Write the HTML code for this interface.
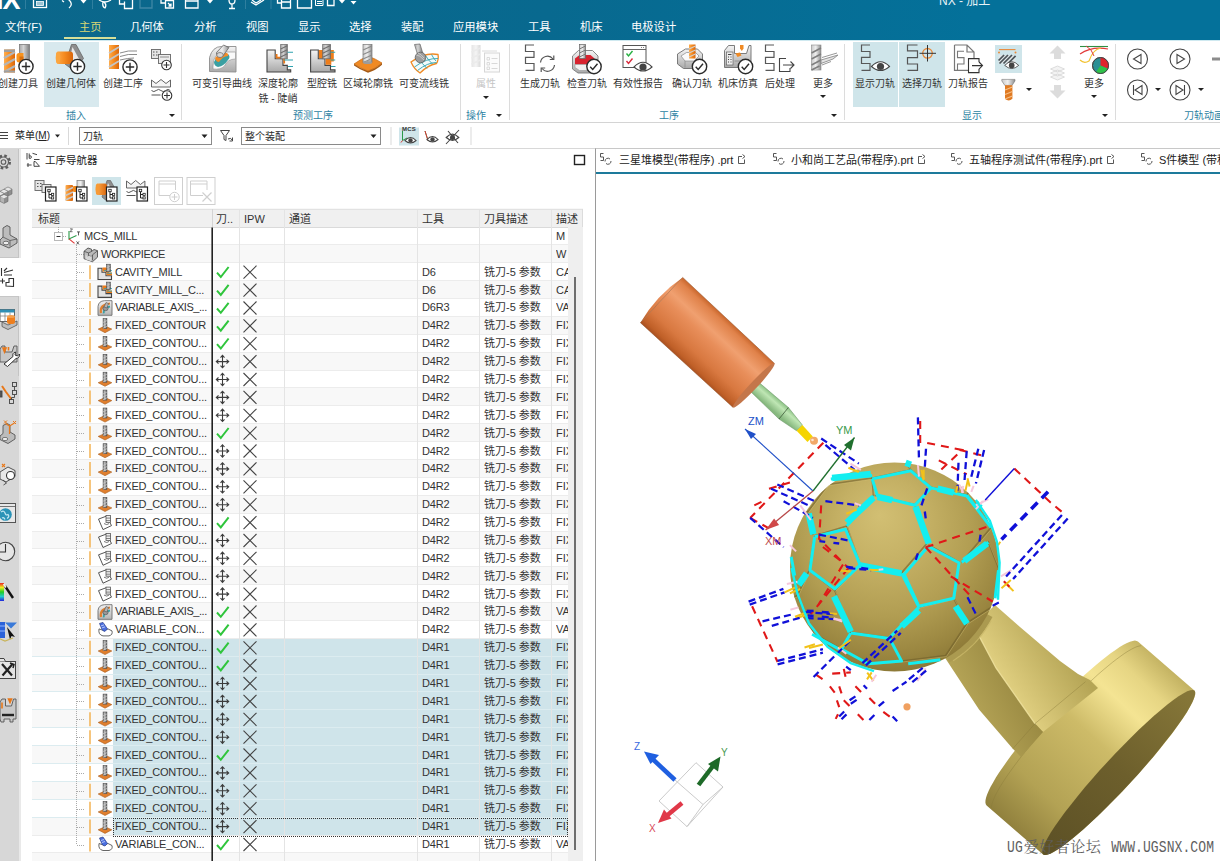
<!DOCTYPE html>
<html lang="zh"><head><meta charset="utf-8"><title>NX - 加工</title>
<style>
html,body{margin:0;padding:0;}
body{width:1220px;height:861px;overflow:hidden;background:#fff;position:relative;
 font-family:"Liberation Sans","Noto Sans CJK SC",sans-serif;font-size:11px;color:#2a2a2a;}
.abs{position:absolute;}
svg{position:absolute;overflow:visible;}
#title{position:absolute;left:0;top:0;width:1220px;height:40px;background:linear-gradient(90deg,#0b678b 0%,#08698f 45%,#04719a 80%,#04719a 100%);overflow:hidden;}
#title .tab{position:absolute;top:18.8px;font-size:11.3px;color:#fff;white-space:nowrap;line-height:16px;}
#ribbon{position:absolute;left:0;top:40px;width:1220px;height:82px;background:#fff;border-bottom:1px solid #d4d4d4;box-shadow:inset 0 1px 0 #cfe9f0;}
.rl{position:absolute;font-size:10px;color:#333;white-space:nowrap;line-height:14.5px;text-align:center;transform:translateX(-50%);}
.gl{position:absolute;top:69px;font-size:10px;color:#2b7fa2;white-space:nowrap;line-height:13px;transform:translateX(-50%);}
.sep{position:absolute;top:4px;width:1px;height:76px;background:#dcdcdc;}
.hl{position:absolute;background:#cfe5ea;}
.dd{position:absolute;width:0;height:0;border-left:3px solid transparent;border-right:3px solid transparent;border-top:3px solid #222;}
#selbar{position:absolute;left:0;top:123px;width:1220px;height:25px;background:#fff;border-bottom:1px solid #d8d8d8;}
.combo{position:absolute;top:4px;height:18px;border:1px solid #8a8a8a;background:transparent;font-size:10px;line-height:17px;padding-left:3px;box-sizing:border-box;}
#sidebar{position:absolute;left:0;top:149px;width:21px;height:712px;background:linear-gradient(90deg,#d7d7d7 0,#d7d7d7 19px,#fff 19px);overflow:hidden;}
#nav{position:absolute;left:22px;top:149px;width:572px;height:712px;background:#fff;}
#view{position:absolute;left:595px;top:148px;width:625px;height:713px;background:#fff;border-left:1px solid #9a9a9a;border-top:1px solid #c8c8c8;box-sizing:border-box;}
.ht{font-size:11px;line-height:14px;color:#333;white-space:nowrap;}
.rt{font-size:11px;line-height:15px;color:#333;white-space:nowrap;}
.wm{font-family:"Liberation Mono",monospace;font-size:13px;display:inline-block;transform:scaleY(1.25);transform-origin:50% 70%;letter-spacing:0.1px;}
.wc{font-family:"Liberation Serif","Noto Serif CJK SC",serif;font-size:15px;letter-spacing:0.5px;margin-left:1px;}

</style></head>
<body>
<div id="title">
<div class="abs" style="left:-16px;top:-13px;font-size:27px;font-weight:bold;color:#fff;line-height:27px;letter-spacing:-1px;font-family:'Liberation Sans',sans-serif;">NX</div>
<svg width="400" height="12" style="left:0;top:0" fill="none" stroke="#fff" stroke-width="1.3">
<line x1="25.5" y1="0" x2="25.5" y2="9" stroke="#2f7f9f" stroke-width="1"/>
<rect x="33.5" y="-3" width="13" height="10.5"/><rect x="36.5" y="1.5" width="7" height="4" fill="#9cc3d3" stroke="#fff" stroke-width="0.8"/>
<path d="M62 0.5 L64 2 M68 -1 Q74 4 69 8"/>
<path d="M80.5 0 h6 l-3 3.5z" fill="#fff" stroke="none"/>
<line x1="92.5" y1="0" x2="92.5" y2="9" stroke="#2f7f9f" stroke-width="1"/>
<path d="M99 0 q6 4 12 0 M103 2 q-1 5 2 6 q2 -3 -1 -6"/>
<path d="M119.500 -2 v6 h5 M124.500 1.500 v7 h8 v-10"/>
<path d="M140 -2 v10 h12 v-8 l-3 -3" stroke="#3f87a5"/>
<path d="M161 -2 v5 h4 M165.500 0.500 h8 v7.500 h-8z M168 3 l3 3 M171 3.500 v2.500 h-2.500"/>
<path d="M185.500 -2 v10 h12.500 v-10 M185.500 1 h12.500"/>
<path d="M207 0 h6 l-3 3.500z" fill="#fff" stroke="none"/>
<path d="M229 0 q0 4 3 4 q3 0 3 -4 M232 4 v4 M229 8.500 h6"/>
<line x1="245.500" y1="0" x2="245.500" y2="9" stroke="#2f7f9f" stroke-width="1"/>
<path d="M251 2 l5 3 l8 -5 M252 0 l4 3 l5 -3"/>
<line x1="271" y1="0" x2="271" y2="9" stroke="#2f7f9f" stroke-width="1"/>
<path d="M277.500 -1 v4 h4 M281.500 0 v8 h9 v-8 M281.500 2 h9"/>
<path d="M297.500 -1 v9 h14 v-9"/>
<path d="M315.500 -1 v6.500 h7.500 v-6.500 M317 1.500 h5 M317 3.500 h5" stroke-width="1"/>
<path d="M327.500 -1 v6.500 h6.500 v-6.500"/>
<path d="M339 0 h6 l-3 3.500z M350.500 1 h6 l-3 3.500z" fill="#fff" stroke="none"/>
</svg>
<div class="abs" style="left:939px;top:-6.5px;font-size:12px;color:#e8f2f6;line-height:14px;white-space:nowrap;">NX - 加工</div>
<div class="tab" style="left:5px">文件(F)</div>
<div class="tab" style="left:79px;color:#d9d774">主页</div>
<div class="abs" style="left:64px;top:36.5px;width:52px;height:2.5px;background:#d6df98"></div>
<div class="tab" style="left:130px">几何体</div>
<div class="tab" style="left:194px">分析</div>
<div class="tab" style="left:246px">视图</div>
<div class="tab" style="left:298px">显示</div>
<div class="tab" style="left:349px">选择</div>
<div class="tab" style="left:401px">装配</div>
<div class="tab" style="left:453px">应用模块</div>
<div class="tab" style="left:528px">工具</div>
<div class="tab" style="left:580px">机床</div>
<div class="tab" style="left:631px">电极设计</div>
</div>
<div id="ribbon">
<div class="hl" style="left:44px;top:2px;width:55px;height:65px;background:#d8e9ee"></div>
<div class="hl" style="left:853px;top:2px;width:45px;height:65px"></div>
<div class="hl" style="left:899px;top:2px;width:46px;height:65px"></div>
<div class="hl" style="left:995px;top:5px;width:27px;height:28px"></div>
<div class="sep" style="left:181px"></div>
<div class="sep" style="left:460px"></div>
<div class="sep" style="left:509px"></div>
<div class="sep" style="left:844px"></div>
<div class="sep" style="left:1115px"></div>
<div class="rl" style="left:18px;top:37px">创建刀具</div>
<div class="rl" style="left:71px;top:37px">创建几何体</div>
<div class="rl" style="left:123px;top:37px">创建工序</div>
<div class="rl" style="left:222px;top:37px">可变引导曲线</div>
<div class="rl" style="left:278px;top:37px">深度轮廓<br>铣 - 陡峭</div>
<div class="rl" style="left:322px;top:37px">型腔铣</div>
<div class="rl" style="left:368px;top:37px">区域轮廓铣</div>
<div class="rl" style="left:424px;top:37px">可变流线铣</div>
<div class="rl" style="left:540px;top:37px">生成刀轨</div>
<div class="rl" style="left:587px;top:37px">检查刀轨</div>
<div class="rl" style="left:638px;top:37px">有效性报告</div>
<div class="rl" style="left:692px;top:37px">确认刀轨</div>
<div class="rl" style="left:738px;top:37px">机床仿真</div>
<div class="rl" style="left:780px;top:37px">后处理</div>
<div class="rl" style="left:823px;top:37px">更多</div>
<div class="rl" style="left:875px;top:37px">显示刀轨</div>
<div class="rl" style="left:922px;top:37px">选择刀轨</div>
<div class="rl" style="left:968px;top:37px">刀轨报告</div>
<div class="rl" style="left:1094px;top:37px">更多</div>
<div class="rl" style="left:486px;top:37px;color:#c4c4c4">属性</div>
<div class="gl" style="left:76px">插入</div>
<div class="gl" style="left:313px">预测工序</div>
<div class="gl" style="left:476px">操作</div>
<div class="gl" style="left:669px">工序</div>
<div class="gl" style="left:972px">显示</div>
<div class="gl" style="left:1204px">刀轨动画</div>
<div class="dd" style="left:169px;top:74px"></div>
<div class="dd" style="left:496px;top:74px"></div>
<div class="dd" style="left:831px;top:74px"></div>
<div class="dd" style="left:1102px;top:74px"></div>
<div class="dd" style="left:483px;top:56px"></div>
<div class="dd" style="left:820px;top:55px"></div>
<div class="dd" style="left:1091px;top:55px"></div>
<div class="dd" style="left:1026px;top:48px"></div>
<div class="dd" style="left:1155px;top:48px"></div>
<div class="dd" style="left:1198px;top:48px"></div>
<svg width="1220" height="82" style="left:0;top:0">
<defs>
<linearGradient id="gOr" x1="0" x2="1" y1="0" y2="0"><stop offset="0" stop-color="#ffad4d"/><stop offset="0.5" stop-color="#f58a1f"/><stop offset="1" stop-color="#d9650a"/></linearGradient>
<linearGradient id="gGr" x1="0" x2="1" y1="0" y2="0"><stop offset="0" stop-color="#c9c9c9"/><stop offset="0.45" stop-color="#efefef"/><stop offset="1" stop-color="#8e8e8e"/></linearGradient>
<linearGradient id="gGr2" x1="0" x2="1" y1="0" y2="0"><stop offset="0" stop-color="#a8a8a8"/><stop offset="0.4" stop-color="#d4d4d4"/><stop offset="1" stop-color="#7c7c7c"/></linearGradient>
<linearGradient id="gGv" x1="0" x2="0" y1="0" y2="1"><stop offset="0" stop-color="#f4f4f4"/><stop offset="1" stop-color="#a9a9a9"/></linearGradient>
<linearGradient id="gPale" x1="0" x2="1" y1="0" y2="0"><stop offset="0" stop-color="#e2e2e2"/><stop offset="0.5" stop-color="#f4f4f4"/><stop offset="1" stop-color="#d6d6d6"/></linearGradient>
<g id="plus7"><circle r="7.100" fill="#fff" stroke="#2a2a2a" stroke-width="1.400"/><path d="M-4.200 0h8.400M0 -4.200v8.400" stroke="#2a2a2a" stroke-width="1.400"/></g>
<g id="plus5"><circle r="4.8" fill="#fff" stroke="#333" stroke-width="1.1"/><path d="M-3 0h6M0 -3v6" stroke="#333" stroke-width="1.1"/></g>
<g id="chk7"><circle r="7.200" fill="#fff" stroke="#2a2a2a" stroke-width="1.400"/><path d="M-3.800 0.300l2.500 2.700l4.800 -5.800" stroke="#2a2a2a" stroke-width="1.400" fill="none"/></g>
<g id="eye"><path d="M-9 0Q0 -9.500 9 0Q0 8 -9 0z" fill="#fff" stroke="#444" stroke-width="1.100"/><circle r="3.600" fill="#444"/></g>
<g id="five" fill="none" stroke="#585858" stroke-width="1.200"><path d="M8.500 0H0V6.500H8.500V12.300H0V18.500H8.500V25.300H0"/></g>
</defs>
<!-- 1 创建刀具 -->
<g>
<rect x="19.500" y="4.500" width="10" height="18" fill="url(#gGr2)" stroke="#7a7a7a" stroke-width="0.800"/>
<rect x="4" y="9.500" width="11" height="23" fill="url(#gOr)"/>
<path d="M4 18l11 -6M4 25l11 -6M4 32l11 -6" stroke="#b5b5b5" stroke-width="2.200"/>
<rect x="4" y="9.500" width="11" height="2.500" fill="#9f9f9f"/><rect x="4" y="30.500" width="11" height="2" fill="#9f9f9f"/>
<path d="M16.500 15.500q0 -2.500 2.500 -2.500h4.500v9.500h-4.500q-2.500 0 -2.500 -2.500z" fill="#f7931e"/>
<path d="M19.500 16.500h4v6h-4z" fill="#d96f0c"/>
<use href="#plus7" x="26" y="26.500"/>
</g>
<!-- 2 创建几何体 -->
<g>
<path d="M65 24l6.500 -19.500h4.500l7.500 14l-3.500 4l-8 6.500l-3 -2z" fill="#8e8e8e" stroke="#666" stroke-width="0.800"/>
<path d="M72.500 7l6.500 12l-3 4l-6.500 -4z" fill="#e9e9e9"/>
<rect x="56" y="11.500" width="17" height="12.500" rx="3" fill="url(#gOr)"/>
<ellipse cx="58" cy="17.700" rx="2.300" ry="6.200" fill="#fba640"/>
<use href="#plus7" x="77.500" y="26.500"/>
</g>
<!-- 3 创建工序 -->
<g>
<rect x="109" y="5" width="10" height="24" fill="url(#gOr)"/>
<path d="M109 13l10 -6M109 20l10 -6M109 27l10 -6" stroke="#c4c4c4" stroke-width="2"/>
<path d="M120 13q8 -3 17 -2M120 16.500q8 -3 17 -2M120 20q8 -2 14 -2" stroke="#8b8b8b" stroke-width="1" fill="none"/>
<use href="#plus7" x="130" y="27"/>
</g>
<!-- 4 small -->
<g>
<rect x="151.500" y="9.500" width="9" height="9" fill="#e5e5e5" stroke="#666" stroke-width="0.900"/>
<path d="M153 12h1.500M156 12h1.500M153 15h1.500M156 15h1.500" stroke="#555" stroke-width="1"/>
<rect x="158.500" y="14.500" width="12" height="9" fill="#ececec" stroke="#666" stroke-width="0.900"/>
<path d="M160 17h9" stroke="#777" stroke-width="0.800"/>
<use href="#plus5" x="166.500" y="25"/>
<path d="M151.500 47v-7l4.500 3.500l5 -4l5 4l4.500 -3.500v7z" fill="#f4f4f4" stroke="#555" stroke-width="0.900"/>
<path d="M151.500 50.500q2.300 2.200 4.700 0t4.700 0t4.700 0t4.700 0M151.500 55h9" stroke="#555" stroke-width="1" fill="none"/>
<use href="#plus5" x="167" y="55.500"/>
</g>
<!-- 5 可变引导曲线 -->
<g>
<path d="M209.500 31.500v-14q3 -11 12 -11h14.500v25.500z" fill="url(#gGv)" stroke="#8c8c8c" stroke-width="0.900"/>
<path d="M213 26q0 -12 10 -14h12.500v7q-8 0 -11 7q-4 4 -11.500 3z" fill="#fafafa" stroke="#999" stroke-width="0.700"/>
<path d="M214 22q4 -9 14 -8q3 3 0 6q-4 6 -10 7q-4 -1 -4 -5z" fill="#3aa0a2"/>
<path d="M215 18q5 -6 12 -5q2 1 1 3q-5 0 -9 6q-3 0 -4 -4z" fill="#f28c28"/>
<path d="M216.500 12.500l7 -7.500l5.500 2.500l-6.500 9q-3.500 1 -5 -1q-1.500 -1.500 -1 -3z" fill="url(#gGr)" stroke="#666" stroke-width="0.800"/>
<ellipse cx="220" cy="15" rx="3.300" ry="2.500" fill="#d6d6d6" stroke="#666" stroke-width="0.700"/>
</g>
<!-- 6 深度轮廓铣 -->
<g>
<path d="M267 10H275.200V18.800H283V25.400H287.300V29.900H290.700V32H267Z" fill="url(#gGv)" stroke="#444" stroke-width="1.100"/>
<path d="M276.600 14v3.600h7.600v6" fill="none" stroke="#e8781a" stroke-width="1.800"/>
<rect x="280.700" y="4.400" width="6.600" height="14.400" fill="url(#gGr2)" stroke="#666" stroke-width="0.700"/>
<path d="M280.700 9l6.600 -3.200M280.700 13l6.600 -3.200M280.700 17l6.600 -3.200" stroke="#6e6e6e" stroke-width="1.100"/>
<path d="M287.500 12.200h5.500M284 20h9M288 26.500h5" stroke="#2fa3b0" stroke-width="1.100"/>
</g>
<!-- 7 型腔铣 -->
<g>
<path d="M310.600 10H318.300V18.800H325V25.400H330.500V29.900H335V32H310.600Z" fill="url(#gGv)" stroke="#444" stroke-width="1.100"/>
<path d="M318.900 10H333.800V21.500H331.300V24.700H325.700V18.200H318.900Z" fill="#ee7d1a"/>
<rect x="322.700" y="4.400" width="7.800" height="14.400" fill="url(#gGr2)" stroke="#666" stroke-width="0.700"/>
<path d="M322.700 9.200l7.800 -3.600M322.700 13.200l7.800 -3.600M322.700 17.200l7.800 -3.600" stroke="#6e6e6e" stroke-width="1.100"/>
<path d="M330.700 12.200h4.500M330.700 20h4.500M331 26.500h4.500" stroke="#2fa3b0" stroke-width="1.100"/>
</g>
<!-- 8 区域轮廓铣 -->
<g>
<path d="M354 24q7 -5 14 -8q8 3 14 7q-7 6 -14 8q-8 -3 -14 -7z" fill="#f08a24" stroke="#c96a12" stroke-width="0.700"/>
<path d="M354 24q6 4.500 14 7q8 -2.500 14 -8v1.800q-6 5.500 -14 8q-8 -3 -14 -7.300z" fill="#a65a14"/>
<rect x="363" y="4.500" width="9" height="18" fill="url(#gGr)" stroke="#777" stroke-width="0.700"/>
<path d="M363 10l9 -4M363 14.500l9 -4M363 19l9 -4M363 22.500l7 -3" stroke="#8a8a8a" stroke-width="1.100"/>
<ellipse cx="367.500" cy="22.500" rx="4.500" ry="1.600" fill="#9c9c9c"/>
</g>
<!-- 9 可变流线铣 -->
<g>
<path d="M411 22q14 -10 27 -7.500q1 5 -1.500 9q-9 2 -16.500 9.500q-6 -4 -9 -11z" fill="#f3fbfb" stroke="#f08a24" stroke-width="1.300"/>
<path d="M414.500 27q12 -9 23.500 -8.500M417.500 30.500q10 -8 19 -8M419 18q3 6 8 10.500M425.500 15.500q3 5 7 8.500M431.500 14.500q2 4 4.500 6.500" stroke="#2fa3b0" stroke-width="0.900" fill="none"/>
<path d="M414.500 4.500l5.500 -0.500l3 10l-5 2z" fill="url(#gGr2)" stroke="#666" stroke-width="0.700"/>
<circle cx="420.500" cy="17.500" r="5.300" fill="#9c9c9c" stroke="#5e5e5e" stroke-width="0.800"/>
<path d="M416.500 15q3 0 7.500 5M418 13q3 1 6 5" stroke="#d0d0d0" stroke-width="0.900" fill="none"/>
</g>
<!-- 10 属性 -->
<g opacity="0.900">
<rect x="471.500" y="5" width="9" height="22" fill="url(#gPale)"/>
<path d="M471.500 12l9 -4M471.500 18l9 -4M471.500 24l9 -4" stroke="#e9e9e9" stroke-width="1.600"/>
<rect x="484.500" y="13" width="15" height="19" fill="#fbfbfb" stroke="#d2d2d2" stroke-width="1"/>
<path d="M482 11h15" stroke="#d8d8d8" stroke-width="1"/>
<path d="M487 17.500h2.500v2.500h-2.500zM487 22.500h2.500v2.500h-2.500zM487 27h2.500v2.500h-2.500z" fill="none" stroke="#d0d0d0" stroke-width="0.800"/>
<path d="M491.500 18.500h6M491.500 23.500h6M491.500 28.500h6" stroke="#d4d4d4" stroke-width="1"/>
</g>
<!-- 11 生成刀轨 -->
<g>
<use href="#five" x="525.500" y="5"/>
<path d="M540.500 22.500a7 7 0 0 1 12.500 -3.500M554.500 25a7 7 0 0 1 -12.500 3.500" fill="none" stroke="#555" stroke-width="1.200"/>
<path d="M553.800 15.500v4h-4M541.200 32v-4h4" fill="none" stroke="#555" stroke-width="1.200"/>
</g>
<!-- 12 检查刀轨 -->
<g>
<path d="M572.500 16l6 -5.500h14l5.500 5.500v13l-5 4h-15l-5.500 -4z" fill="url(#gGv)" stroke="#7a7a7a" stroke-width="0.900"/>
<path d="M575 18.500l4.500 -3.500h11l4 3.500v6h-19.500z" fill="#d8232f"/>
<path d="M575 24.500h19.500v3l-4 3h-11l-4.500 -3z" fill="#f1f1f1" stroke="#999" stroke-width="0.600"/>
<rect x="579.500" y="4.500" width="6" height="14" fill="url(#gGr)" stroke="#666" stroke-width="0.700"/>
<path d="M579.500 9l6 -3M579.500 13l6 -3M579.500 17l6 -3" stroke="#7a7a7a" stroke-width="1"/>
<use href="#chk7" x="594" y="26.500"/>
</g>
<!-- 13 有效性报告 -->
<g>
<rect x="623" y="5.500" width="23" height="22" fill="#fff" stroke="#555" stroke-width="1"/>
<path d="M623 9.500h23" stroke="#555" stroke-width="0.900"/>
<path d="M641 7.500h0.800M643 7.500h0.800" stroke="#555" stroke-width="0.900"/>
<path d="M626.500 13.500l2 2.500l4 -5" stroke="#26b040" stroke-width="1.400" fill="none"/>
<path d="M626.500 21l2 2.500l4 -5" stroke="#d82a3c" stroke-width="1.400" fill="none"/>
<use href="#eye" x="643" y="27"/>
</g>
<!-- 14 确认刀轨 -->
<g>
<path d="M677.500 14l8 -5h12l5 5v10l-7 4.500h-12l-6 -4.500z" fill="url(#gGv)" stroke="#6e6e6e" stroke-width="0.900"/>
<path d="M681 16l5.500 -3.500h9l3.500 3.500l-5 5h-9z" fill="#fafafa" stroke="#8a8a8a" stroke-width="0.700"/>
<path d="M685 21v6.500M694 21v7" stroke="#8a8a8a" stroke-width="0.700"/>
<rect x="689" y="4.500" width="6.500" height="14" fill="url(#gOr)"/>
<path d="M689 9l6.500 -3M689 13l6.500 -3M689 17l6.500 -3" stroke="#d0d0d0" stroke-width="1.200"/>
<use href="#chk7" x="699.500" y="26.500"/>
</g>
<!-- 15 机床仿真 -->
<g>
<path d="M724.500 27.500v-17l4 -5h6v8h12l2.500 -8h2v22z" fill="url(#gGv)" stroke="#6e6e6e" stroke-width="0.900"/>
<rect x="726.500" y="12" width="6.500" height="13" fill="#ededed" stroke="#666" stroke-width="0.700"/>
<path d="M728 14.500h3.500M728 17h1M730.500 17h1M728 19.500h1M730.500 19.500h1M728 22h1M730.500 22h1" stroke="#444" stroke-width="1"/>
<path d="M740 5h3.500v3.500l-1.700 2.500l-1.800 -2.500z" fill="#f08a24"/>
<path d="M735.500 13.500l4.500 -1l1.500 3l-4 1.500z" fill="#f08a24"/>
<path d="M734.500 21h14" stroke="#8a8a8a" stroke-width="0.800"/>
<use href="#chk7" x="745.500" y="26.500"/>
</g>
<!-- 16 后处理 -->
<g>
<use href="#five" x="765.500" y="5"/>
<path d="M786 18.500h-6.500v13h10.500v-3.500" fill="none" stroke="#444" stroke-width="1.100"/>
<path d="M783 25h10.500M790.500 21.500l3.500 3.500l-3.500 3.500" fill="none" stroke="#444" stroke-width="1.100"/>
</g>
<!-- 17 更多 -->
<g>
<rect x="811.500" y="5" width="9.500" height="25" fill="url(#gGr)" stroke="#8a8a8a" stroke-width="0.600"/>
<path d="M811.500 13l9.500 -5M811.500 19l9.500 -5M811.500 25l9.500 -5M811.500 30l8 -4" stroke="#7e7e7e" stroke-width="1.500"/>
<path d="M821 20l17 -5l-5 4l-12 4.500zM822 17.500l15 -4.500M822 25l9 -3.500" fill="#e3e3e3" stroke="#8b8b8b" stroke-width="0.900"/>
</g>
<!-- 18 显示刀轨 -->
<g>
<use href="#five" x="861.500" y="5"/>
<use href="#eye" x="880.500" y="26.500"/>
</g>
<!-- 19 选择刀轨 -->
<g>
<g fill="none" stroke="#555" stroke-width="1.200"><path d="M917.500 5H907.500V10.800H917.500V17.600H907.500V24H917.500V30.400H907.500"/></g>
<circle cx="927.500" cy="13.300" r="4.800" fill="none" stroke="#e8893a" stroke-width="1.300"/>
<path d="M927.500 5v16.500M919.500 13.300h16.500" stroke="#333" stroke-width="1"/>
</g>
<!-- 20 刀轨报告 -->
<g>
<path d="M954.500 5h12.500l7 7v8M967 5v7h7M968 30.400h-13.500v-25.400" fill="none" stroke="#777" stroke-width="1.200"/>
<path d="M964 11.200h-6.500v6.400h6.500v6.400h-6.500v6" fill="none" stroke="#777" stroke-width="1.100"/>
<path d="M968.500 18.600h10.500v4M979 29v3.500h-10.500z" fill="#fff" stroke="none"/>
<path d="M979 22v-3.400h-10.500v14h10.500v-3.600" fill="#fff" stroke="#333" stroke-width="1.100"/>
<path d="M972 25.600h10M979 22l3.500 3.600l-3.500 3.600" fill="none" stroke="#333" stroke-width="1.100"/>
</g>
<!-- 21 small display icons -->
<g>
<path d="M999 9.600h16.500" stroke="#e8893a" stroke-width="1.100"/>
<circle cx="999" cy="12.600" r="1" fill="#e8893a"/><circle cx="1015.500" cy="12.600" r="1" fill="#e8893a"/>
<rect x="998.600" y="15" width="17" height="8.500" fill="#dfe6e8"/>
<path d="M998.600 20.500l5.500 -5.500M999.500 23.500l8.500 -8.500M1003.500 23.500l8.500 -8.500M1008 23.500l7.600 -7.600" stroke="#4a5358" stroke-width="1.700"/>
<g transform="translate(1011.700 25.400) scale(0.780)"><use href="#eye"/></g>
<path d="M1001.800 39.400h13.200v1.500l-3 4.500h-7.200l-3 -4.500z" fill="url(#gGr)" stroke="#777" stroke-width="0.600"/>
<path d="M1005 45.200h7.400v13.500q-3.700 3.500 -7.400 0z" fill="#e07a22"/>
<path d="M1005 50l7.400 -3M1005 54.500l7.400 -3M1005 59l7.400 -3" stroke="#f6c089" stroke-width="1.100"/>
</g>
<!-- 22 faded arrows -->
<g fill="#dcdcdc">
<path d="M1057.500 5.500l8 8h-4.500v5.500h-7v-5.500h-4.500z"/>
<path d="M1057.500 58.500l8 -8h-4.500v-5.500h-7v5.500h-4.500z"/>
<path d="M1057.500 26l7 3l-7 3l-7 -3zM1057.500 30l7 3l-7 3l-7 -3zM1057.500 34l7 3l-7 3l-7 -3z" fill="#f3f3f3" stroke="#d4d4d4" stroke-width="0.800"/>
</g>
<!-- 23 更多 -->
<g fill="none">
<path d="M1080 6.500h28" stroke="#2e8f43" stroke-width="1.100"/>
<path d="M1080 14q12 -8 28 -5" stroke="#e23a3a" stroke-width="1.200"/>
<path d="M1080 20q4 4 9 1q4 -12 12 -13" stroke="#f2c230" stroke-width="1.200"/>
<path d="M1086 6q6 3 8 10" stroke="#e23a3a" stroke-width="1"/>
<circle cx="1100.500" cy="25.500" r="8" fill="#2b8f95" stroke="#444" stroke-width="0.900"/>
<path d="M1100.500 25.500v-8a8 8 0 0 1 7.300 11.300z" fill="#e0242c"/>
<path d="M1100.500 25.500l7.300 3.300a8 8 0 0 1 -11.800 3.300z" fill="#2fc24a"/>
<circle cx="1100.500" cy="25.500" r="8" stroke="#444" stroke-width="0.900"/>
</g>
<!-- 24 animation buttons -->
<g fill="none" stroke="#444" stroke-width="1.100">
<circle cx="1137.500" cy="19" r="10"/><circle cx="1180" cy="19" r="10"/><circle cx="1137.500" cy="50" r="10"/><circle cx="1180" cy="50" r="10"/>
<path d="M1141 14.500v9l-7.500 -4.500z"/>
<path d="M1177 14.500v9l7.500 -4.500z"/>
<path d="M1142 45.500v9l-7 -4.500zM1133.500 45v10"/>
<path d="M1176 45.500v9l7 -4.500zM1184.500 45v10"/>
</g>
<rect x="1212" y="17.500" width="8" height="3" fill="#8c8c8c"/>

</svg>
</div><div id="selbar">
<svg width="480" height="25" style="left:0;top:0">
<path d="M0 9.500h8M0 12.500h8M0 15.500h8" stroke="#444" stroke-width="1"/>
<path d="M55 11.500h5l-2.500 3z" fill="#222"/>
<path d="M68.500 4v18M391 4v18M471 4v18" stroke="#d9d9d9" stroke-width="1"/>
<path d="M201.500 11.500h6l-3 3.500zM370.500 11.500h6l-3 3.500z" fill="#222"/>
<path d="M220.500 7.500h9l-3.500 5v5l-2 -1v-4zM228 16q3 -2 4.500 1.500M232.500 14.500v3.500h-3" fill="none" stroke="#444" stroke-width="1"/>
<rect x="399" y="4.500" width="20" height="18" fill="#cfe5ea"/>
<path d="M402.500 8v9.500M402.500 17.500l4.500 -2.500" stroke="#2a9a48" stroke-width="1"/>
<path d="M402.500 17.500l-1.500 2" stroke="#d33" stroke-width="1"/>
<g transform="translate(410.500 17.500) scale(0.620)"><path d="M-9 0Q0 -9.500 9 0Q0 8 -9 0z" fill="#fff" stroke="#444" stroke-width="1.700"/><circle r="3.600" fill="#444"/></g>
<path d="M425 8l3 9.500l5 -4" fill="none" stroke="#2a9a48" stroke-width="1"/><path d="M425 8l3 9.500" stroke="#d33" stroke-width="1"/>
<g transform="translate(432.500 16.500) scale(0.620)"><path d="M-9 0Q0 -9.500 9 0Q0 8 -9 0z" fill="#fff" stroke="#444" stroke-width="1.700"/><circle r="3.600" fill="#444"/></g>
<g transform="translate(452.500 14.500) scale(0.700)"><path d="M-9 0Q0 -9.500 9 0Q0 8 -9 0z" fill="#fff" stroke="#444" stroke-width="1.600"/><circle r="3.600" fill="#444"/></g>
<path d="M446 21l13 -14M448 8l10 12" stroke="#444" stroke-width="1.100"/>
</svg>
<div class="abs" style="left:402px;top:3px;font-size:6px;line-height:7px;color:#333;letter-spacing:0.200px;font-weight:bold">MCS</div>
<div class="abs" style="left:15px;top:6px;font-size:10px;line-height:13px;white-space:nowrap;color:#222">菜单(<u>M</u>)</div>
<div class="combo" style="left:79px;width:133px">刀轨</div>
<div class="combo" style="left:241px;width:140px">整个装配</div>
</div>
<div id="sidebar">
<svg width="21" height="712" style="left:0;top:0">
<g transform="translate(0 -149)">
<rect x="0" y="258" width="21" height="38" fill="#fff"/>
<path d="M0 257.500h19M0 296.500h19" stroke="#c6c6c6" stroke-width="1"/>
<path d="M20 149v109M20 296v565" stroke="#e9e9e9" stroke-width="2"/><path d="M18.500 149v109M18.500 296v80" stroke="#c4c4c4" stroke-width="1"/>
<!-- gear -->
<circle cx="3.500" cy="162" r="6.300" fill="none" stroke="#5c5c5c" stroke-width="2.400" stroke-dasharray="2.600 2.350"/><circle cx="3.500" cy="162" r="5" fill="#d8d8d8" stroke="#5c5c5c" stroke-width="1.100"/><circle cx="3.500" cy="162" r="2.300" fill="none" stroke="#5c5c5c" stroke-width="1.100"/>
<!-- cubes -->
<defs><g id="cb"><path d="M0 0l4 -2l4 2l-4 2z" fill="#e6e6e6"/><path d="M0 0l4 2v5l-4 -2z" fill="#b4b4b4"/><path d="M8 0l-4 2v5l4 -2z" fill="#8e8e8e"/><path d="M0 0l4 -2l4 2v5l-4 2l-4 -2z" fill="none" stroke="#6a6a6a" stroke-width="0.600"/></g></defs>
<use href="#cb" x="4" y="189"/><use href="#cb" x="0" y="191.200"/><use href="#cb" x="-4" y="193.400"/><use href="#cb" x="0" y="196.400"/>
<!-- part -->
<path d="M0 240l3 -3v-9l4 -2.500l3 1.500v8l7 4v4l-8 5l-9 -4z" fill="#bcbcbc" stroke="#555" stroke-width="0.900"/><path d="M3 237l7 3.500l7 -1.500M10 240.500v6" fill="none" stroke="#555" stroke-width="0.800"/><ellipse cx="6" cy="243" rx="3" ry="1.800" fill="#eee" stroke="#555" stroke-width="0.800"/>
<!-- navigator -->
<g fill="none" stroke="#333" stroke-width="1.100"><path d="M1.500 268v8M4 271l3 -3M4 272.500l9 -2.500M4 275h8M0 281h5M2.500 278.500v5M6 286v-3.500h3v-4h4.500v8z"/></g>
<!-- table/cylinder -->
<rect x="0" y="309.500" width="14.500" height="12" fill="#fff" stroke="#555" stroke-width="0.900"/><rect x="0" y="309.500" width="14.500" height="3" fill="#2f8fb5"/><path d="M0 316h14.500M5 312.500v9M10 312.500v9" stroke="#777" stroke-width="0.700"/>
<path d="M2 322l6 3l9 -4v4l-9 4.500l-6 -3z" fill="#bdbdbd" stroke="#555" stroke-width="0.800"/><rect x="7" y="316" width="8" height="8" rx="2.500" fill="#ee7f1e"/><ellipse cx="11" cy="316.500" rx="4" ry="1.600" fill="#f7a04a"/>
<!-- machine/wrench -->
<path d="M0 362v-13l2 -3h3v6h7l2 -6h3v16z" fill="#c6c6c6" stroke="#555" stroke-width="0.900"/><path d="M3 348l1.500 4l1.500 -4zM8.500 347v3.500" stroke="#e8781a" stroke-width="1.600" fill="#e8781a"/><path d="M4 364l9 -7.500q-1 -3.500 2.500 -4.500l-0.500 3l2.500 1l2 -2q0.500 4 -3.500 4.500l-8.500 8z" fill="#fff" stroke="#333" stroke-width="1"/>
<!-- tree orange -->
<path d="M2 386l4 6M6 392l6 8" stroke="#e8781a" stroke-width="2"/><g fill="#d8d8d8" stroke="#444" stroke-width="0.900"><rect x="12.500" y="382.500" width="4" height="4"/><rect x="12.500" y="390.500" width="4" height="4"/><rect x="9.500" y="399.500" width="4" height="4"/><rect x="-2" y="391" width="4" height="6" fill="#555"/></g><path d="M14.500 386.500v4M14.500 394.500v3h-3v2" fill="none" stroke="#444" stroke-width="0.900"/>
<!-- part + axes -->
<path d="M0 436l3 -2.500v-8l4 -2l3 1.500v7l5 3v4l-7 4.500l-8 -4z" fill="#bcbcbc" stroke="#555" stroke-width="0.900"/><ellipse cx="5" cy="439" rx="2.800" ry="1.600" fill="#eee" stroke="#555" stroke-width="0.700"/><path d="M9.500 434v-8l5 -3M9.500 426l-4 -2.500" fill="none" stroke="#e8781a" stroke-width="1.200"/><path d="M13 421l3 3M16 421l-3 3M4 420.500l3 3M7 420.500l-3 3" stroke="#e8781a" stroke-width="1"/>
<!-- roll -->
<path d="M0 472l8 -5l7 3.500v6l-9 5.500l-6 -3z" fill="#e8e8e8" stroke="#444" stroke-width="0.900"/><circle cx="10.500" cy="475.500" r="4" fill="#fff" stroke="#333" stroke-width="1.100"/><path d="M2 464l3 3M5 464l-3 3" stroke="#e8781a" stroke-width="1.100"/><path d="M3 480l3.500 3l-3 2" fill="none" stroke="#444" stroke-width="0.900"/>
<!-- globe window -->
<rect x="-1" y="503.500" width="16.500" height="19" fill="#e8e8e8" stroke="#555" stroke-width="1"/><path d="M-1 506.500h16.500" stroke="#555" stroke-width="0.800"/><circle cx="5.500" cy="514.500" r="6.300" fill="#2a93b7"/><path d="M1 512q3 -2 4 1t3 1.500q2 2 -1 4M2 518q2 -1 3 1.500" fill="none" stroke="#bfe6f2" stroke-width="1.200"/>
<!-- clock -->
<circle cx="5.500" cy="551.500" r="9.200" fill="#e6e6e6" stroke="#444" stroke-width="1.100"/><path d="M5.500 544v8h-6" fill="none" stroke="#333" stroke-width="1.100"/>
<!-- palette -->
<defs><linearGradient id="rb" x1="0" x2="0" y1="0" y2="1"><stop offset="0" stop-color="#e22"/><stop offset="0.250" stop-color="#ee2"/><stop offset="0.500" stop-color="#2c2"/><stop offset="0.750" stop-color="#2cc"/><stop offset="1" stop-color="#22d"/></linearGradient></defs>
<rect x="-1" y="583" width="5" height="18" fill="url(#rb)"/><path d="M5 586l8 12" stroke="#111" stroke-width="2.400"/><path d="M3.500 584l2.500 3.500" stroke="#eee" stroke-width="1.600"/>
<!-- blue arrows cursor -->
<rect x="-1" y="622" width="6" height="16" fill="#2b62d9"/><path d="M-1 626h6M-1 631h6" stroke="#8fb4ff" stroke-width="1"/><path d="M5 622.500h12l-6 6z" fill="#3a7ad9"/><path d="M7 627l8 10l-3.500 -1l-1.500 3.500z" fill="#111"/><path d="M-1 638.500l6 2.500l8 -3" fill="none" stroke="#c9b45a" stroke-width="1.200"/>
<!-- tools box -->
<rect x="-1" y="661.500" width="16.500" height="17" fill="#e4e4e4" stroke="#444" stroke-width="1"/><path d="M-1 661.500v-3h5l1.500 3" fill="#e4e4e4" stroke="#444" stroke-width="1"/><path d="M2 664l10 11.500M12.500 664l-10 11.500" stroke="#222" stroke-width="2.200"/><path d="M10 663l4 1.500l-1 3.500" fill="none" stroke="#222" stroke-width="1.500"/>
<!-- machine orange -->
<path d="M0 719v-17l2 -3h3.500v7h6l2 -7h2.500v20h-3v3h-3v-3h-6v3h-3z" fill="#c9c9c9" stroke="#555" stroke-width="0.900"/><path d="M2 702.500v6M8.500 699l1.500 3.500l1.500 -3.500z" stroke="#e8781a" stroke-width="1.600" fill="#e8781a"/><path d="M2 715h12" stroke="#222" stroke-width="2.400"/>
</g>
</svg>
</div>
<div id="nav">
<div class="abs" style="left:23px;top:4px;font-size:10.5px;line-height:14px;white-space:nowrap;color:#222">工序导航器</div>
<div class="abs" style="left:10px;top:59px;width:551px;height:653px;background:#f8f8f8"></div>
<div class="abs" style="left:10px;top:60px;width:551px;height:19px;background:#f0f0f0;border-top:1px solid #e2e2e2;border-bottom:1px solid #dadada;box-sizing:border-box"></div>
<div class="abs" style="left:10px;top:78.50px;width:551px;height:17.88px;background:#fff"></div>
<div class="abs" style="left:10px;top:114.27px;width:551px;height:17.88px;background:#fff"></div>
<div class="abs" style="left:10px;top:150.03px;width:551px;height:17.88px;background:#fff"></div>
<div class="abs" style="left:10px;top:185.80px;width:551px;height:17.88px;background:#fff"></div>
<div class="abs" style="left:10px;top:221.56px;width:551px;height:17.88px;background:#fff"></div>
<div class="abs" style="left:10px;top:257.33px;width:551px;height:17.88px;background:#fff"></div>
<div class="abs" style="left:10px;top:293.10px;width:551px;height:17.88px;background:#fff"></div>
<div class="abs" style="left:10px;top:328.86px;width:551px;height:17.88px;background:#fff"></div>
<div class="abs" style="left:10px;top:364.63px;width:551px;height:17.88px;background:#fff"></div>
<div class="abs" style="left:10px;top:400.39px;width:551px;height:17.88px;background:#fff"></div>
<div class="abs" style="left:10px;top:436.16px;width:551px;height:17.88px;background:#fff"></div>
<div class="abs" style="left:10px;top:471.93px;width:551px;height:17.88px;background:#fff"></div>
<div class="abs" style="left:10px;top:507.69px;width:551px;height:17.88px;background:#fff"></div>
<div class="abs" style="left:10px;top:543.46px;width:551px;height:17.88px;background:#fff"></div>
<div class="abs" style="left:10px;top:579.22px;width:551px;height:17.88px;background:#fff"></div>
<div class="abs" style="left:10px;top:614.99px;width:551px;height:17.88px;background:#fff"></div>
<div class="abs" style="left:10px;top:650.76px;width:551px;height:17.88px;background:#fff"></div>
<div class="abs" style="left:10px;top:686.52px;width:551px;height:17.88px;background:#fff"></div>
<div class="abs" style="left:91px;top:489.81px;width:455px;height:196.71px;background:#cfe4ea"></div>
<div class="abs" style="left:91px;top:668.64px;width:455px;height:18.88px;border:1px dotted #333;box-sizing:border-box"></div>
<div class="abs" style="left:546px;top:78px;width:15px;height:634px;background:#efefef;z-index:3"></div>
<div class="abs" style="left:552.0px;top:128px;width:2px;height:573px;background:#6e6e6e;z-index:4"></div>
<svg width="572" height="712" style="left:0;top:0">
<defs>
<linearGradient id="nOr" x1="0" x2="1"><stop offset="0" stop-color="#ffad4d"/><stop offset="1" stop-color="#d9650a"/></linearGradient>
<linearGradient id="nGr" x1="0" x2="1"><stop offset="0" stop-color="#d8d8d8"/><stop offset="0.5" stop-color="#f2f2f2"/><stop offset="1" stop-color="#8e8e8e"/></linearGradient>
<linearGradient id="nDk" x1="0" x2="1"><stop offset="0" stop-color="#8a8a8a"/><stop offset="0.45" stop-color="#bdbdbd"/><stop offset="1" stop-color="#5a5a5a"/></linearGradient>
<linearGradient id="nGv" x1="0" x2="0" y1="0" y2="1"><stop offset="0" stop-color="#f0f0f0"/><stop offset="1" stop-color="#b4b4b4"/></linearGradient>
<g id="s_chk"><path d="M-6 0.500l3.800 4.300l7.800 -10" fill="none" stroke="#2fc53c" stroke-width="2"/></g>
<g id="s_x"><path d="M-6.500 -6.500l13 13M6.500 -6.500l-13 13" stroke="#444" stroke-width="1.100"/></g>
<g id="s_mov" fill="none" stroke="#3c3c3c" stroke-width="1.100"><path d="M-6 0h12M0 -6v12M-2 -4l2 -2.200l2 2.200M-2 4l2 2.200l2 -2.200M-4 -2l-2.200 2l2.200 2M4 -2l2.200 2l-2.200 2"/></g>
<g id="i_fix"><path d="M-6.800 3.200l6.800 -3l6.800 3l-6.800 3.600z" fill="#e07f2e" stroke="#a85a18" stroke-width="0.600"/><rect x="-1.900" y="-7.300" width="3.800" height="10" fill="url(#nDk)" stroke="#4a4a4a" stroke-width="0.600"/><path d="M-1.900 -3.500l3.800 -1.800M-1.900 -0.500l3.800 -1.800M-1.900 2.300l3.800 -1.800" stroke="#c9c9c9" stroke-width="0.800"/></g>
<g id="i_fix2"><path d="M-6.500 -3.500l8 -3l5 9.500l-8.500 4z" fill="#fff" stroke="#555" stroke-width="1"/><rect x="1" y="-7" width="4.500" height="7" fill="#eee" stroke="#555" stroke-width="0.800"/><path d="M1 -4.500h4.500M1 -2h4.500" stroke="#555" stroke-width="0.700"/><path d="M-1 1q3 2 5 0" stroke="#555" stroke-width="0.800" fill="none"/></g>
<g id="i_cav"><path d="M-7 7.300v-11.300h4v4h4v3.500h5.500v3.800z" fill="#e2e2e2" stroke="#444" stroke-width="1.100"/><path d="M-2.400 -4.600h6.400v5h3v2.600h-5.500v-3.600h-3.900z" fill="#ee7d1a"/><path d="M-1 -1.500h8M2 1h5" stroke="#2fa3b0" stroke-width="0.900"/><rect x="1.600" y="-8" width="3.800" height="7.500" fill="url(#nDk)" stroke="#4a4a4a" stroke-width="0.600"/><path d="M1.600 -4.500l3.800 -1.800M1.600 -1.800l3.800 -1.800" stroke="#c9c9c9" stroke-width="0.700"/></g>
<g id="i_vax"><path d="M-7 7.300v-8.800q0.500 -5.500 6.500 -5.800h7.500v14.600z" fill="url(#nGv)" stroke="#6e6e6e" stroke-width="0.900"/><path d="M-4 5q-1.500 -8.500 9 -9.500" fill="none" stroke="#e07f2e" stroke-width="2.200"/><path d="M-1.300 5.300q-0.500 -5.500 6.300 -6.800" fill="none" stroke="#3aa0a2" stroke-width="1.800"/><ellipse cx="0.500" cy="0.500" rx="2.600" ry="2.200" fill="#9a9a9a" stroke="#555" stroke-width="0.700"/><path d="M-1 -1l2 -4.500l2.500 1l-1.500 4.500z" fill="#b5b5b5" stroke="#555" stroke-width="0.600"/></g>
<g id="i_vcon"><path d="M-6 -1q-1 6 4 7h6q4 -1 3 -5l-4 -2q-5 3 -9 0z" fill="#fff" stroke="#555" stroke-width="0.900"/><path d="M-5.500 -6.500l3.500 -1l4.500 6.500l-2.500 2.500q-2 0 -3 -2z" fill="#4a6ee0" stroke="#2b3f8a" stroke-width="0.700"/><path d="M-4 -4l3 -1M-3 -2l3 -1" stroke="#dfe6ff" stroke-width="0.700"/></g>
<g id="i_mcs"><path d="M-4.500 -5.500v8l7.500 -3.500" fill="none" stroke="#2a9a48" stroke-width="1.100"/><path d="M-4.500 2.500l5.500 4.500" stroke="#d33" stroke-width="1.100"/><path d="M-3.500 -7.500h2.500l-2.500 2.800h2.500" stroke="#333" stroke-width="0.700" fill="none"/><path d="M3.500 -4.500h3M5 -4.500v3.500" stroke="#333" stroke-width="0.800" fill="none"/><path d="M3 5l2.500 3M5.500 5l-2.500 3" stroke="#333" stroke-width="0.800"/></g>
<g id="i_wp"><path d="M-6.500 -3l4 -3.300l3.500 1.200v2.300l2.500 -2l3.500 1.200v6.500l-5 4.500l-8.500 -3z" fill="#bababa" stroke="#4f4f4f" stroke-width="0.900"/><path d="M-6.500 -3l4.500 1.600l3 -1.400M-2 -1.400v2.600l2.500 1l1 -1M2 6v-5.500l5 -4M-2 1.200l-1 1" fill="none" stroke="#4f4f4f" stroke-width="0.800"/><path d="M-5 0v5l6 2v-4.500l-2.500 -1l-1 1z" fill="#d6d6d6" stroke="none"/></g>
</defs>

<line x1="10.0" y1="95.5" x2="561.0" y2="95.5" stroke="#ececec" stroke-width="1" />
<line x1="10.0" y1="113.5" x2="561.0" y2="113.5" stroke="#ececec" stroke-width="1" />
<line x1="10.0" y1="131.5" x2="561.0" y2="131.5" stroke="#ececec" stroke-width="1" />
<line x1="10.0" y1="149.5" x2="561.0" y2="149.5" stroke="#ececec" stroke-width="1" />
<line x1="10.0" y1="167.5" x2="561.0" y2="167.5" stroke="#ececec" stroke-width="1" />
<line x1="10.0" y1="185.5" x2="561.0" y2="185.5" stroke="#ececec" stroke-width="1" />
<line x1="10.0" y1="203.5" x2="561.0" y2="203.5" stroke="#ececec" stroke-width="1" />
<line x1="10.0" y1="221.5" x2="561.0" y2="221.5" stroke="#ececec" stroke-width="1" />
<line x1="10.0" y1="238.5" x2="561.0" y2="238.5" stroke="#ececec" stroke-width="1" />
<line x1="10.0" y1="256.5" x2="561.0" y2="256.5" stroke="#ececec" stroke-width="1" />
<line x1="10.0" y1="274.5" x2="561.0" y2="274.5" stroke="#ececec" stroke-width="1" />
<line x1="10.0" y1="292.5" x2="561.0" y2="292.5" stroke="#ececec" stroke-width="1" />
<line x1="10.0" y1="310.5" x2="561.0" y2="310.5" stroke="#ececec" stroke-width="1" />
<line x1="10.0" y1="328.5" x2="561.0" y2="328.5" stroke="#ececec" stroke-width="1" />
<line x1="10.0" y1="346.5" x2="561.0" y2="346.5" stroke="#ececec" stroke-width="1" />
<line x1="10.0" y1="364.5" x2="561.0" y2="364.5" stroke="#ececec" stroke-width="1" />
<line x1="10.0" y1="382.5" x2="561.0" y2="382.5" stroke="#ececec" stroke-width="1" />
<line x1="10.0" y1="399.5" x2="561.0" y2="399.5" stroke="#ececec" stroke-width="1" />
<line x1="10.0" y1="417.5" x2="561.0" y2="417.5" stroke="#ececec" stroke-width="1" />
<line x1="10.0" y1="435.5" x2="561.0" y2="435.5" stroke="#ececec" stroke-width="1" />
<line x1="10.0" y1="453.5" x2="561.0" y2="453.5" stroke="#ececec" stroke-width="1" />
<line x1="10.0" y1="471.5" x2="561.0" y2="471.5" stroke="#ececec" stroke-width="1" />
<line x1="10.0" y1="489.5" x2="561.0" y2="489.5" stroke="#ececec" stroke-width="1" />
<line x1="10.0" y1="507.5" x2="561.0" y2="507.5" stroke="#dcecf0" stroke-width="1" />
<line x1="10.0" y1="525.5" x2="561.0" y2="525.5" stroke="#dcecf0" stroke-width="1" />
<line x1="10.0" y1="542.5" x2="561.0" y2="542.5" stroke="#dcecf0" stroke-width="1" />
<line x1="10.0" y1="560.5" x2="561.0" y2="560.5" stroke="#dcecf0" stroke-width="1" />
<line x1="10.0" y1="578.5" x2="561.0" y2="578.5" stroke="#dcecf0" stroke-width="1" />
<line x1="10.0" y1="596.5" x2="561.0" y2="596.5" stroke="#dcecf0" stroke-width="1" />
<line x1="10.0" y1="614.5" x2="561.0" y2="614.5" stroke="#dcecf0" stroke-width="1" />
<line x1="10.0" y1="632.5" x2="561.0" y2="632.5" stroke="#dcecf0" stroke-width="1" />
<line x1="10.0" y1="650.5" x2="561.0" y2="650.5" stroke="#dcecf0" stroke-width="1" />
<line x1="10.0" y1="668.5" x2="561.0" y2="668.5" stroke="#dcecf0" stroke-width="1" />
<line x1="10.0" y1="686.5" x2="561.0" y2="686.5" stroke="#ececec" stroke-width="1" />
<line x1="10.0" y1="703.5" x2="561.0" y2="703.5" stroke="#ececec" stroke-width="1" />
<line x1="10.0" y1="721.5" x2="561.0" y2="721.5" stroke="#ececec" stroke-width="1" />
<line x1="217.5" y1="61.0" x2="217.5" y2="712.0" stroke="#e4e4e4" stroke-width="1" />
<line x1="262.5" y1="61.0" x2="262.5" y2="712.0" stroke="#e4e4e4" stroke-width="1" />
<line x1="395.5" y1="61.0" x2="395.5" y2="712.0" stroke="#e4e4e4" stroke-width="1" />
<line x1="457.5" y1="61.0" x2="457.5" y2="712.0" stroke="#e4e4e4" stroke-width="1" />
<line x1="529.5" y1="61.0" x2="529.5" y2="712.0" stroke="#e4e4e4" stroke-width="1" />
<line x1="560.5" y1="60.0" x2="560.5" y2="78.0" stroke="#dcdcdc" stroke-width="1" />
<line x1="190.5" y1="60.0" x2="190.5" y2="78.0" stroke="#d4d4d4" stroke-width="1" />
<line x1="190.2" y1="78.5" x2="190.2" y2="712.0" stroke="#222" stroke-width="1.6" />
<line x1="36.5" y1="78.0" x2="36.5" y2="83.0" stroke="#aaa" stroke-width="1" stroke-dasharray="1 1"/>
<line x1="54.5" y1="96.0" x2="54.5" y2="695.5" stroke="#aaa" stroke-width="1" stroke-dasharray="1 1"/>
<line x1="41.0" y1="87.5" x2="44.0" y2="87.5" stroke="#aaa" stroke-width="1" stroke-dasharray="1 1"/>
<line x1="55.0" y1="105.5" x2="62.0" y2="105.5" stroke="#aaa" stroke-width="1" stroke-dasharray="1 1"/>
<line x1="55.0" y1="123.5" x2="62.0" y2="123.5" stroke="#aaa" stroke-width="1" stroke-dasharray="1 1"/>
<line x1="55.0" y1="141.5" x2="62.0" y2="141.5" stroke="#aaa" stroke-width="1" stroke-dasharray="1 1"/>
<line x1="55.0" y1="159.5" x2="62.0" y2="159.5" stroke="#aaa" stroke-width="1" stroke-dasharray="1 1"/>
<line x1="55.0" y1="177.5" x2="62.0" y2="177.5" stroke="#aaa" stroke-width="1" stroke-dasharray="1 1"/>
<line x1="55.0" y1="195.5" x2="62.0" y2="195.5" stroke="#aaa" stroke-width="1" stroke-dasharray="1 1"/>
<line x1="55.0" y1="213.5" x2="62.0" y2="213.5" stroke="#aaa" stroke-width="1" stroke-dasharray="1 1"/>
<line x1="55.0" y1="231.5" x2="62.0" y2="231.5" stroke="#aaa" stroke-width="1" stroke-dasharray="1 1"/>
<line x1="55.0" y1="248.5" x2="62.0" y2="248.5" stroke="#aaa" stroke-width="1" stroke-dasharray="1 1"/>
<line x1="55.0" y1="266.5" x2="62.0" y2="266.5" stroke="#aaa" stroke-width="1" stroke-dasharray="1 1"/>
<line x1="55.0" y1="284.5" x2="62.0" y2="284.5" stroke="#aaa" stroke-width="1" stroke-dasharray="1 1"/>
<line x1="55.0" y1="302.5" x2="62.0" y2="302.5" stroke="#aaa" stroke-width="1" stroke-dasharray="1 1"/>
<line x1="55.0" y1="320.5" x2="62.0" y2="320.5" stroke="#aaa" stroke-width="1" stroke-dasharray="1 1"/>
<line x1="55.0" y1="338.5" x2="62.0" y2="338.5" stroke="#aaa" stroke-width="1" stroke-dasharray="1 1"/>
<line x1="55.0" y1="356.5" x2="62.0" y2="356.5" stroke="#aaa" stroke-width="1" stroke-dasharray="1 1"/>
<line x1="55.0" y1="374.5" x2="62.0" y2="374.5" stroke="#aaa" stroke-width="1" stroke-dasharray="1 1"/>
<line x1="55.0" y1="392.5" x2="62.0" y2="392.5" stroke="#aaa" stroke-width="1" stroke-dasharray="1 1"/>
<line x1="55.0" y1="409.5" x2="62.0" y2="409.5" stroke="#aaa" stroke-width="1" stroke-dasharray="1 1"/>
<line x1="55.0" y1="427.5" x2="62.0" y2="427.5" stroke="#aaa" stroke-width="1" stroke-dasharray="1 1"/>
<line x1="55.0" y1="445.5" x2="62.0" y2="445.5" stroke="#aaa" stroke-width="1" stroke-dasharray="1 1"/>
<line x1="55.0" y1="463.5" x2="62.0" y2="463.5" stroke="#aaa" stroke-width="1" stroke-dasharray="1 1"/>
<line x1="55.0" y1="481.5" x2="62.0" y2="481.5" stroke="#aaa" stroke-width="1" stroke-dasharray="1 1"/>
<line x1="55.0" y1="499.5" x2="62.0" y2="499.5" stroke="#aaa" stroke-width="1" stroke-dasharray="1 1"/>
<line x1="55.0" y1="517.5" x2="62.0" y2="517.5" stroke="#aaa" stroke-width="1" stroke-dasharray="1 1"/>
<line x1="55.0" y1="535.5" x2="62.0" y2="535.5" stroke="#aaa" stroke-width="1" stroke-dasharray="1 1"/>
<line x1="55.0" y1="552.5" x2="62.0" y2="552.5" stroke="#aaa" stroke-width="1" stroke-dasharray="1 1"/>
<line x1="55.0" y1="570.5" x2="62.0" y2="570.5" stroke="#aaa" stroke-width="1" stroke-dasharray="1 1"/>
<line x1="55.0" y1="588.5" x2="62.0" y2="588.5" stroke="#aaa" stroke-width="1" stroke-dasharray="1 1"/>
<line x1="55.0" y1="606.5" x2="62.0" y2="606.5" stroke="#aaa" stroke-width="1" stroke-dasharray="1 1"/>
<line x1="55.0" y1="624.5" x2="62.0" y2="624.5" stroke="#aaa" stroke-width="1" stroke-dasharray="1 1"/>
<line x1="55.0" y1="642.5" x2="62.0" y2="642.5" stroke="#aaa" stroke-width="1" stroke-dasharray="1 1"/>
<line x1="55.0" y1="660.5" x2="62.0" y2="660.5" stroke="#aaa" stroke-width="1" stroke-dasharray="1 1"/>
<line x1="55.0" y1="678.5" x2="62.0" y2="678.5" stroke="#aaa" stroke-width="1" stroke-dasharray="1 1"/>
<line x1="55.0" y1="696.5" x2="62.0" y2="696.5" stroke="#aaa" stroke-width="1" stroke-dasharray="1 1"/>
<rect x="32.5" y="83.5" width="8" height="8" fill="#fff" stroke="#b9b9b9" stroke-width="1"/>
<line x1="34.5" y1="87.5" x2="38.5" y2="87.5" stroke="#333" stroke-width="1" />
<use href="#i_mcs" x="51.5" y="87.4"/>
<use href="#i_wp" x="68.5" y="105.3"/>
<line x1="68.0" y1="116.2" x2="68.0" y2="130.2" stroke="#f2ad45" stroke-width="1.4" />
<use href="#i_cav" x="83.0" y="123.2"/>
<use href="#s_chk" x="201.0" y="123.2"/>
<use href="#s_x" x="228.0" y="123.2"/>
<line x1="68.0" y1="134.1" x2="68.0" y2="148.1" stroke="#f2ad45" stroke-width="1.4" />
<use href="#i_cav" x="83.0" y="141.1"/>
<use href="#s_chk" x="201.0" y="141.1"/>
<use href="#s_x" x="228.0" y="141.1"/>
<line x1="68.0" y1="152.0" x2="68.0" y2="166.0" stroke="#f2ad45" stroke-width="1.4" />
<use href="#i_vax" x="83.0" y="159.0"/>
<use href="#s_chk" x="201.0" y="159.0"/>
<use href="#s_x" x="228.0" y="159.0"/>
<line x1="68.0" y1="169.9" x2="68.0" y2="183.9" stroke="#f2ad45" stroke-width="1.4" />
<use href="#i_fix" x="83.0" y="176.9"/>
<use href="#s_chk" x="201.0" y="176.9"/>
<use href="#s_x" x="228.0" y="176.9"/>
<line x1="68.0" y1="187.7" x2="68.0" y2="201.7" stroke="#f2ad45" stroke-width="1.4" />
<use href="#i_fix" x="83.0" y="194.7"/>
<use href="#s_chk" x="201.0" y="194.7"/>
<use href="#s_x" x="228.0" y="194.7"/>
<line x1="68.0" y1="205.6" x2="68.0" y2="219.6" stroke="#f2ad45" stroke-width="1.4" />
<use href="#i_fix" x="83.0" y="212.6"/>
<use href="#s_mov" x="200.5" y="212.6"/>
<use href="#s_x" x="228.0" y="212.6"/>
<line x1="68.0" y1="223.5" x2="68.0" y2="237.5" stroke="#f2ad45" stroke-width="1.4" />
<use href="#i_fix" x="83.0" y="230.5"/>
<use href="#s_mov" x="200.5" y="230.5"/>
<use href="#s_x" x="228.0" y="230.5"/>
<line x1="68.0" y1="241.4" x2="68.0" y2="255.4" stroke="#f2ad45" stroke-width="1.4" />
<use href="#i_fix" x="83.0" y="248.4"/>
<use href="#s_mov" x="200.5" y="248.4"/>
<use href="#s_x" x="228.0" y="248.4"/>
<line x1="68.0" y1="259.3" x2="68.0" y2="273.3" stroke="#f2ad45" stroke-width="1.4" />
<use href="#i_fix" x="83.0" y="266.3"/>
<use href="#s_mov" x="200.5" y="266.3"/>
<use href="#s_x" x="228.0" y="266.3"/>
<line x1="68.0" y1="277.2" x2="68.0" y2="291.2" stroke="#f2ad45" stroke-width="1.4" />
<use href="#i_fix" x="83.0" y="284.2"/>
<use href="#s_chk" x="201.0" y="284.2"/>
<use href="#s_x" x="228.0" y="284.2"/>
<line x1="68.0" y1="295.0" x2="68.0" y2="309.0" stroke="#f2ad45" stroke-width="1.4" />
<use href="#i_fix" x="83.0" y="302.0"/>
<use href="#s_mov" x="200.5" y="302.0"/>
<use href="#s_x" x="228.0" y="302.0"/>
<line x1="68.0" y1="312.9" x2="68.0" y2="326.9" stroke="#f2ad45" stroke-width="1.4" />
<use href="#i_fix" x="83.0" y="319.9"/>
<use href="#s_mov" x="200.5" y="319.9"/>
<use href="#s_x" x="228.0" y="319.9"/>
<line x1="68.0" y1="330.8" x2="68.0" y2="344.8" stroke="#f2ad45" stroke-width="1.4" />
<use href="#i_fix" x="83.0" y="337.8"/>
<use href="#s_mov" x="200.5" y="337.8"/>
<use href="#s_x" x="228.0" y="337.8"/>
<line x1="68.0" y1="348.7" x2="68.0" y2="362.7" stroke="#f2ad45" stroke-width="1.4" />
<use href="#i_fix" x="83.0" y="355.7"/>
<use href="#s_mov" x="200.5" y="355.7"/>
<use href="#s_x" x="228.0" y="355.7"/>
<line x1="68.0" y1="366.6" x2="68.0" y2="380.6" stroke="#f2ad45" stroke-width="1.4" />
<use href="#i_fix2" x="83.0" y="373.6"/>
<use href="#s_chk" x="201.0" y="373.6"/>
<use href="#s_x" x="228.0" y="373.6"/>
<line x1="68.0" y1="384.5" x2="68.0" y2="398.5" stroke="#f2ad45" stroke-width="1.4" />
<use href="#i_fix2" x="83.0" y="391.5"/>
<use href="#s_mov" x="200.5" y="391.5"/>
<use href="#s_x" x="228.0" y="391.5"/>
<line x1="68.0" y1="402.3" x2="68.0" y2="416.3" stroke="#f2ad45" stroke-width="1.4" />
<use href="#i_fix2" x="83.0" y="409.3"/>
<use href="#s_mov" x="200.5" y="409.3"/>
<use href="#s_x" x="228.0" y="409.3"/>
<line x1="68.0" y1="420.2" x2="68.0" y2="434.2" stroke="#f2ad45" stroke-width="1.4" />
<use href="#i_fix2" x="83.0" y="427.2"/>
<use href="#s_mov" x="200.5" y="427.2"/>
<use href="#s_x" x="228.0" y="427.2"/>
<line x1="68.0" y1="438.1" x2="68.0" y2="452.1" stroke="#f2ad45" stroke-width="1.4" />
<use href="#i_fix2" x="83.0" y="445.1"/>
<use href="#s_mov" x="200.5" y="445.1"/>
<use href="#s_x" x="228.0" y="445.1"/>
<line x1="68.0" y1="456.0" x2="68.0" y2="470.0" stroke="#f2ad45" stroke-width="1.4" />
<use href="#i_vax" x="83.0" y="463.0"/>
<use href="#s_chk" x="201.0" y="463.0"/>
<use href="#s_x" x="228.0" y="463.0"/>
<line x1="68.0" y1="473.9" x2="68.0" y2="487.9" stroke="#f2ad45" stroke-width="1.4" />
<use href="#i_vcon" x="83.0" y="480.9"/>
<use href="#s_chk" x="201.0" y="480.9"/>
<use href="#s_x" x="228.0" y="480.9"/>
<line x1="68.0" y1="491.8" x2="68.0" y2="505.8" stroke="#f2ad45" stroke-width="1.4" />
<use href="#i_fix" x="83.0" y="498.8"/>
<use href="#s_chk" x="201.0" y="498.8"/>
<use href="#s_x" x="228.0" y="498.8"/>
<line x1="68.0" y1="509.6" x2="68.0" y2="523.6" stroke="#f2ad45" stroke-width="1.4" />
<use href="#i_fix" x="83.0" y="516.6"/>
<use href="#s_chk" x="201.0" y="516.6"/>
<use href="#s_x" x="228.0" y="516.6"/>
<line x1="68.0" y1="527.5" x2="68.0" y2="541.5" stroke="#f2ad45" stroke-width="1.4" />
<use href="#i_fix" x="83.0" y="534.5"/>
<use href="#s_mov" x="200.5" y="534.5"/>
<use href="#s_x" x="228.0" y="534.5"/>
<line x1="68.0" y1="545.4" x2="68.0" y2="559.4" stroke="#f2ad45" stroke-width="1.4" />
<use href="#i_fix" x="83.0" y="552.4"/>
<use href="#s_mov" x="200.5" y="552.4"/>
<use href="#s_x" x="228.0" y="552.4"/>
<line x1="68.0" y1="563.3" x2="68.0" y2="577.3" stroke="#f2ad45" stroke-width="1.4" />
<use href="#i_fix" x="83.0" y="570.3"/>
<use href="#s_mov" x="200.5" y="570.3"/>
<use href="#s_x" x="228.0" y="570.3"/>
<line x1="68.0" y1="581.2" x2="68.0" y2="595.2" stroke="#f2ad45" stroke-width="1.4" />
<use href="#i_fix" x="83.0" y="588.2"/>
<use href="#s_mov" x="200.5" y="588.2"/>
<use href="#s_x" x="228.0" y="588.2"/>
<line x1="68.0" y1="599.0" x2="68.0" y2="613.0" stroke="#f2ad45" stroke-width="1.4" />
<use href="#i_fix" x="83.0" y="606.0"/>
<use href="#s_chk" x="201.0" y="606.0"/>
<use href="#s_x" x="228.0" y="606.0"/>
<line x1="68.0" y1="616.9" x2="68.0" y2="630.9" stroke="#f2ad45" stroke-width="1.4" />
<use href="#i_fix" x="83.0" y="623.9"/>
<use href="#s_mov" x="200.5" y="623.9"/>
<use href="#s_x" x="228.0" y="623.9"/>
<line x1="68.0" y1="634.8" x2="68.0" y2="648.8" stroke="#f2ad45" stroke-width="1.4" />
<use href="#i_fix" x="83.0" y="641.8"/>
<use href="#s_mov" x="200.5" y="641.8"/>
<use href="#s_x" x="228.0" y="641.8"/>
<line x1="68.0" y1="652.7" x2="68.0" y2="666.7" stroke="#f2ad45" stroke-width="1.4" />
<use href="#i_fix" x="83.0" y="659.7"/>
<use href="#s_mov" x="200.5" y="659.7"/>
<use href="#s_x" x="228.0" y="659.7"/>
<line x1="68.0" y1="670.6" x2="68.0" y2="684.6" stroke="#f2ad45" stroke-width="1.4" />
<use href="#i_fix" x="83.0" y="677.6"/>
<use href="#s_mov" x="200.5" y="677.6"/>
<use href="#s_x" x="228.0" y="677.6"/>
<line x1="68.0" y1="688.5" x2="68.0" y2="702.5" stroke="#f2ad45" stroke-width="1.4" />
<use href="#i_vcon" x="83.0" y="695.5"/>
<use href="#s_chk" x="201.0" y="695.5"/>
<use href="#s_x" x="228.0" y="695.5"/>
<g transform="translate(-22 -149)">
<!-- title icon -->
<g fill="none" stroke="#444" stroke-width="1">
<path d="M27 153v6.500M29.200 153.500v4.800h1.600q1.300 -1.200 0 -2.400h-1.600M32.500 153.300l4.500 1.400M26.800 165h4.800M28 163v4M34 159.500h5.500M35.300 161.500l4.200 4.800h-5.500v-4.800z"/>
</g>
<!-- maximize -->
<rect x="574.500" y="155.500" width="10" height="9" fill="#fff" stroke="#222" stroke-width="1.400"/>
<defs>
<g id="badge"><rect x="0" y="0" width="10.500" height="14" fill="#fff" stroke="#222" stroke-width="1.200"/><path d="M3.500 3.500v7.500h3M3.500 7.500h3" fill="none" stroke="#222" stroke-width="1"/><rect x="2.300" y="2.300" width="2.400" height="2.400" fill="#fff" stroke="#222" stroke-width="0.800"/><rect x="6" y="6.300" width="2.200" height="2.200" fill="#fff" stroke="#222" stroke-width="0.800"/><rect x="6" y="9.800" width="2.200" height="2.200" fill="#fff" stroke="#222" stroke-width="0.800"/></g>
</defs>
<rect x="92" y="177" width="29" height="28" fill="#cfe5ea"/>
<!-- icon1 -->
<rect x="35" y="180.500" width="9" height="10" fill="#e5e5e5" stroke="#666" stroke-width="0.900"/>
<path d="M37 183.500h1.500M40 183.500h1.500M37 186.500h1.500M40 186.500h1.500" stroke="#555" stroke-width="1"/>
<rect x="42" y="184.500" width="9" height="8" fill="#ececec" stroke="#666" stroke-width="0.900"/>
<use href="#badge" x="45.500" y="187"/>
<!-- icon2 -->
<rect x="77" y="180.500" width="7.500" height="9" fill="url(#nGr)" stroke="#777" stroke-width="0.700"/>
<rect x="65.500" y="185" width="7.500" height="16" rx="1" fill="url(#nOr)"/>
<path d="M65.500 191l7.500 -3.500M65.500 195.500l7.500 -3.500M65.500 200l7.500 -3.500" stroke="#c9c9c9" stroke-width="1.400"/>
<rect x="73" y="186" width="5" height="6" rx="1" fill="#f28a1c"/>
<use href="#badge" x="76.500" y="187"/>
<!-- icon3 -->
<path d="M102 197l5 -16.500h3.500l6.500 11.500l-3 3.500l-6.500 5.500l-2.500 -1.500z" fill="#8e8e8e" stroke="#666" stroke-width="0.700"/><path d="M108 183l5 9.500l-2.500 3l-5 -3z" fill="#e6e6e6"/>
<rect x="96" y="183.500" width="11" height="11.500" rx="2.500" fill="url(#nOr)"/>
<ellipse cx="97.300" cy="189.200" rx="1.800" ry="5.600" fill="#f79a35"/>
<use href="#badge" x="106.500" y="187"/>
<!-- icon4 -->
<path d="M126.500 188v-7l4.500 3.500l4.700 -4l4.700 4l4.500 -3.500v7z" fill="#f4f4f4" stroke="#555" stroke-width="0.900"/>
<path d="M126.500 191.500q2.300 2.200 4.600 0t4.600 0t4.600 0M126.500 195.500h9" stroke="#555" stroke-width="1" fill="none"/>
<use href="#badge" x="137" y="187"/>
<!-- icon5 / icon6 disabled -->
<g fill="none" stroke="#cfcfcf" stroke-width="1">
<rect x="154.500" y="177.500" width="28" height="27" />
<rect x="187" y="177.500" width="28" height="27" />
<path d="M170 195.500h-11v-14.500h16.500v9M159 184h16.500"/>
<path d="M203 195.500h-12.500v-14.500h16.500v9M190.500 184h16.500"/>
<circle cx="174.500" cy="197" r="4.700" fill="#fff"/><path d="M171.500 197h6M174.500 194v6"/>
<path d="M202.500 192.500l9 9M211.500 192.500l-9 9" stroke-width="1.200"/>
</g>
</g>

</svg>
<div class="abs ht" style="left:16px;top:63px">标题</div>
<div class="abs ht" style="left:194px;top:63px">刀..</div>
<div class="abs ht" style="left:222px;top:63px">IPW</div>
<div class="abs ht" style="left:267px;top:63px">通道</div>
<div class="abs ht" style="left:400px;top:63px">工具</div>
<div class="abs ht" style="left:462px;top:63px">刀具描述</div>
<div class="abs ht" style="left:534px;top:63px">描述</div>
<div class="abs rt" style="left:62px;top:79.94px;letter-spacing:-0.22px">MCS_MILL</div>
<div class="abs rt" style="left:534px;top:79.94px;width:14px;overflow:hidden">M</div>
<div class="abs rt" style="left:79px;top:97.82px;letter-spacing:-0.35px">WORKPIECE</div>
<div class="abs rt" style="left:534px;top:97.82px;width:14px;overflow:hidden">W</div>
<div class="abs rt" style="left:93px;top:115.71px;letter-spacing:-0.22px">CAVITY_MILL</div>
<div class="abs rt" style="left:400px;top:115.71px;letter-spacing:-0.200px">D6</div>
<div class="abs rt" style="left:462px;top:115.71px">铣刀-5 参数</div>
<div class="abs rt" style="left:534px;top:115.71px;width:12px;overflow:hidden">CA</div>
<div class="abs rt" style="left:93px;top:133.59px;letter-spacing:-0.22px">CAVITY_MILL_C...</div>
<div class="abs rt" style="left:400px;top:133.59px;letter-spacing:-0.200px">D6</div>
<div class="abs rt" style="left:462px;top:133.59px">铣刀-5 参数</div>
<div class="abs rt" style="left:534px;top:133.59px;width:12px;overflow:hidden">CA</div>
<div class="abs rt" style="left:93px;top:151.47px;letter-spacing:-0.45px">VARIABLE_AXIS_...</div>
<div class="abs rt" style="left:400px;top:151.47px;letter-spacing:-0.200px">D6R3</div>
<div class="abs rt" style="left:462px;top:151.47px">铣刀-5 参数</div>
<div class="abs rt" style="left:534px;top:151.47px;width:12px;overflow:hidden">VA</div>
<div class="abs rt" style="left:93px;top:169.36px;letter-spacing:-0.22px">FIXED_CONTOUR</div>
<div class="abs rt" style="left:400px;top:169.36px;letter-spacing:-0.200px">D4R2</div>
<div class="abs rt" style="left:462px;top:169.36px">铣刀-5 参数</div>
<div class="abs rt" style="left:534px;top:169.36px;width:12px;overflow:hidden">FIX</div>
<div class="abs rt" style="left:93px;top:187.24px;letter-spacing:-0.22px">FIXED_CONTOU...</div>
<div class="abs rt" style="left:400px;top:187.24px;letter-spacing:-0.200px">D4R2</div>
<div class="abs rt" style="left:462px;top:187.24px">铣刀-5 参数</div>
<div class="abs rt" style="left:534px;top:187.24px;width:12px;overflow:hidden">FIX</div>
<div class="abs rt" style="left:93px;top:205.12px;letter-spacing:-0.22px">FIXED_CONTOU...</div>
<div class="abs rt" style="left:400px;top:205.12px;letter-spacing:-0.200px">D4R2</div>
<div class="abs rt" style="left:462px;top:205.12px">铣刀-5 参数</div>
<div class="abs rt" style="left:534px;top:205.12px;width:12px;overflow:hidden">FIX</div>
<div class="abs rt" style="left:93px;top:223.01px;letter-spacing:-0.22px">FIXED_CONTOU...</div>
<div class="abs rt" style="left:400px;top:223.01px;letter-spacing:-0.200px">D4R2</div>
<div class="abs rt" style="left:462px;top:223.01px">铣刀-5 参数</div>
<div class="abs rt" style="left:534px;top:223.01px;width:12px;overflow:hidden">FIX</div>
<div class="abs rt" style="left:93px;top:240.89px;letter-spacing:-0.22px">FIXED_CONTOU...</div>
<div class="abs rt" style="left:400px;top:240.89px;letter-spacing:-0.200px">D4R2</div>
<div class="abs rt" style="left:462px;top:240.89px">铣刀-5 参数</div>
<div class="abs rt" style="left:534px;top:240.89px;width:12px;overflow:hidden">FIX</div>
<div class="abs rt" style="left:93px;top:258.77px;letter-spacing:-0.22px">FIXED_CONTOU...</div>
<div class="abs rt" style="left:400px;top:258.77px;letter-spacing:-0.200px">D4R2</div>
<div class="abs rt" style="left:462px;top:258.77px">铣刀-5 参数</div>
<div class="abs rt" style="left:534px;top:258.77px;width:12px;overflow:hidden">FIX</div>
<div class="abs rt" style="left:93px;top:276.65px;letter-spacing:-0.22px">FIXED_CONTOU...</div>
<div class="abs rt" style="left:400px;top:276.65px;letter-spacing:-0.200px">D4R2</div>
<div class="abs rt" style="left:462px;top:276.65px">铣刀-5 参数</div>
<div class="abs rt" style="left:534px;top:276.65px;width:12px;overflow:hidden">FIX</div>
<div class="abs rt" style="left:93px;top:294.54px;letter-spacing:-0.22px">FIXED_CONTOU...</div>
<div class="abs rt" style="left:400px;top:294.54px;letter-spacing:-0.200px">D4R2</div>
<div class="abs rt" style="left:462px;top:294.54px">铣刀-5 参数</div>
<div class="abs rt" style="left:534px;top:294.54px;width:12px;overflow:hidden">FIX</div>
<div class="abs rt" style="left:93px;top:312.42px;letter-spacing:-0.22px">FIXED_CONTOU...</div>
<div class="abs rt" style="left:400px;top:312.42px;letter-spacing:-0.200px">D4R2</div>
<div class="abs rt" style="left:462px;top:312.42px">铣刀-5 参数</div>
<div class="abs rt" style="left:534px;top:312.42px;width:12px;overflow:hidden">FIX</div>
<div class="abs rt" style="left:93px;top:330.30px;letter-spacing:-0.22px">FIXED_CONTOU...</div>
<div class="abs rt" style="left:400px;top:330.30px;letter-spacing:-0.200px">D4R2</div>
<div class="abs rt" style="left:462px;top:330.30px">铣刀-5 参数</div>
<div class="abs rt" style="left:534px;top:330.30px;width:12px;overflow:hidden">FIX</div>
<div class="abs rt" style="left:93px;top:348.19px;letter-spacing:-0.22px">FIXED_CONTOU...</div>
<div class="abs rt" style="left:400px;top:348.19px;letter-spacing:-0.200px">D4R2</div>
<div class="abs rt" style="left:462px;top:348.19px">铣刀-5 参数</div>
<div class="abs rt" style="left:534px;top:348.19px;width:12px;overflow:hidden">FIX</div>
<div class="abs rt" style="left:93px;top:366.07px;letter-spacing:-0.22px">FIXED_CONTOU...</div>
<div class="abs rt" style="left:400px;top:366.07px;letter-spacing:-0.200px">D4R2</div>
<div class="abs rt" style="left:462px;top:366.07px">铣刀-5 参数</div>
<div class="abs rt" style="left:534px;top:366.07px;width:12px;overflow:hidden">FIX</div>
<div class="abs rt" style="left:93px;top:383.95px;letter-spacing:-0.22px">FIXED_CONTOU...</div>
<div class="abs rt" style="left:400px;top:383.95px;letter-spacing:-0.200px">D4R2</div>
<div class="abs rt" style="left:462px;top:383.95px">铣刀-5 参数</div>
<div class="abs rt" style="left:534px;top:383.95px;width:12px;overflow:hidden">FIX</div>
<div class="abs rt" style="left:93px;top:401.84px;letter-spacing:-0.22px">FIXED_CONTOU...</div>
<div class="abs rt" style="left:400px;top:401.84px;letter-spacing:-0.200px">D4R2</div>
<div class="abs rt" style="left:462px;top:401.84px">铣刀-5 参数</div>
<div class="abs rt" style="left:534px;top:401.84px;width:12px;overflow:hidden">FIX</div>
<div class="abs rt" style="left:93px;top:419.72px;letter-spacing:-0.22px">FIXED_CONTOU...</div>
<div class="abs rt" style="left:400px;top:419.72px;letter-spacing:-0.200px">D4R2</div>
<div class="abs rt" style="left:462px;top:419.72px">铣刀-5 参数</div>
<div class="abs rt" style="left:534px;top:419.72px;width:12px;overflow:hidden">FIX</div>
<div class="abs rt" style="left:93px;top:437.60px;letter-spacing:-0.22px">FIXED_CONTOU...</div>
<div class="abs rt" style="left:400px;top:437.60px;letter-spacing:-0.200px">D4R2</div>
<div class="abs rt" style="left:462px;top:437.60px">铣刀-5 参数</div>
<div class="abs rt" style="left:534px;top:437.60px;width:12px;overflow:hidden">FIX</div>
<div class="abs rt" style="left:93px;top:455.48px;letter-spacing:-0.45px">VARIABLE_AXIS_...</div>
<div class="abs rt" style="left:400px;top:455.48px;letter-spacing:-0.200px">D4R2</div>
<div class="abs rt" style="left:462px;top:455.48px">铣刀-5 参数</div>
<div class="abs rt" style="left:534px;top:455.48px;width:12px;overflow:hidden">VA</div>
<div class="abs rt" style="left:93px;top:473.37px;letter-spacing:-0.22px">VARIABLE_CON...</div>
<div class="abs rt" style="left:400px;top:473.37px;letter-spacing:-0.200px">D4R2</div>
<div class="abs rt" style="left:462px;top:473.37px">铣刀-5 参数</div>
<div class="abs rt" style="left:534px;top:473.37px;width:12px;overflow:hidden">VA</div>
<div class="abs rt" style="left:93px;top:491.25px;letter-spacing:-0.22px">FIXED_CONTOU...</div>
<div class="abs rt" style="left:400px;top:491.25px;letter-spacing:-0.200px">D4R1</div>
<div class="abs rt" style="left:462px;top:491.25px">铣刀-5 参数</div>
<div class="abs rt" style="left:534px;top:491.25px;width:12px;overflow:hidden">FIX</div>
<div class="abs rt" style="left:93px;top:509.13px;letter-spacing:-0.22px">FIXED_CONTOU...</div>
<div class="abs rt" style="left:400px;top:509.13px;letter-spacing:-0.200px">D4R1</div>
<div class="abs rt" style="left:462px;top:509.13px">铣刀-5 参数</div>
<div class="abs rt" style="left:534px;top:509.13px;width:12px;overflow:hidden">FIX</div>
<div class="abs rt" style="left:93px;top:527.02px;letter-spacing:-0.22px">FIXED_CONTOU...</div>
<div class="abs rt" style="left:400px;top:527.02px;letter-spacing:-0.200px">D4R1</div>
<div class="abs rt" style="left:462px;top:527.02px">铣刀-5 参数</div>
<div class="abs rt" style="left:534px;top:527.02px;width:12px;overflow:hidden">FIX</div>
<div class="abs rt" style="left:93px;top:544.90px;letter-spacing:-0.22px">FIXED_CONTOU...</div>
<div class="abs rt" style="left:400px;top:544.90px;letter-spacing:-0.200px">D4R1</div>
<div class="abs rt" style="left:462px;top:544.90px">铣刀-5 参数</div>
<div class="abs rt" style="left:534px;top:544.90px;width:12px;overflow:hidden">FIX</div>
<div class="abs rt" style="left:93px;top:562.78px;letter-spacing:-0.22px">FIXED_CONTOU...</div>
<div class="abs rt" style="left:400px;top:562.78px;letter-spacing:-0.200px">D4R1</div>
<div class="abs rt" style="left:462px;top:562.78px">铣刀-5 参数</div>
<div class="abs rt" style="left:534px;top:562.78px;width:12px;overflow:hidden">FIX</div>
<div class="abs rt" style="left:93px;top:580.67px;letter-spacing:-0.22px">FIXED_CONTOU...</div>
<div class="abs rt" style="left:400px;top:580.67px;letter-spacing:-0.200px">D4R1</div>
<div class="abs rt" style="left:462px;top:580.67px">铣刀-5 参数</div>
<div class="abs rt" style="left:534px;top:580.67px;width:12px;overflow:hidden">FIX</div>
<div class="abs rt" style="left:93px;top:598.55px;letter-spacing:-0.22px">FIXED_CONTOU...</div>
<div class="abs rt" style="left:400px;top:598.55px;letter-spacing:-0.200px">D4R1</div>
<div class="abs rt" style="left:462px;top:598.55px">铣刀-5 参数</div>
<div class="abs rt" style="left:534px;top:598.55px;width:12px;overflow:hidden">FIX</div>
<div class="abs rt" style="left:93px;top:616.43px;letter-spacing:-0.22px">FIXED_CONTOU...</div>
<div class="abs rt" style="left:400px;top:616.43px;letter-spacing:-0.200px">D4R1</div>
<div class="abs rt" style="left:462px;top:616.43px">铣刀-5 参数</div>
<div class="abs rt" style="left:534px;top:616.43px;width:12px;overflow:hidden">FIX</div>
<div class="abs rt" style="left:93px;top:634.31px;letter-spacing:-0.22px">FIXED_CONTOU...</div>
<div class="abs rt" style="left:400px;top:634.31px;letter-spacing:-0.200px">D4R1</div>
<div class="abs rt" style="left:462px;top:634.31px">铣刀-5 参数</div>
<div class="abs rt" style="left:534px;top:634.31px;width:12px;overflow:hidden">FIX</div>
<div class="abs rt" style="left:93px;top:652.20px;letter-spacing:-0.22px">FIXED_CONTOU...</div>
<div class="abs rt" style="left:400px;top:652.20px;letter-spacing:-0.200px">D4R1</div>
<div class="abs rt" style="left:462px;top:652.20px">铣刀-5 参数</div>
<div class="abs rt" style="left:534px;top:652.20px;width:12px;overflow:hidden">FIX</div>
<div class="abs rt" style="left:93px;top:670.08px;letter-spacing:-0.22px">FIXED_CONTOU...</div>
<div class="abs rt" style="left:400px;top:670.08px;letter-spacing:-0.200px">D4R1</div>
<div class="abs rt" style="left:462px;top:670.08px">铣刀-5 参数</div>
<div class="abs rt" style="left:534px;top:670.08px;width:12px;overflow:hidden">FIX</div>
<div class="abs rt" style="left:93px;top:687.96px;letter-spacing:-0.22px">VARIABLE_CON...</div>
<div class="abs rt" style="left:400px;top:687.96px;letter-spacing:-0.200px">D4R1</div>
<div class="abs rt" style="left:462px;top:687.96px">铣刀-5 参数</div>
<div class="abs rt" style="left:534px;top:687.96px;width:12px;overflow:hidden">VA</div>
</div><div id="view">
<div class="abs" style="left:0;top:23px;width:625px;height:2px;background:#1d7a9b"></div>
<div class="abs" style="left:23px;top:4px;font-size:11px;line-height:15px;white-space:nowrap;color:#222">三星堆模型(带程序) .prt</div>
<div class="abs" style="left:195px;top:4px;font-size:11px;line-height:15px;white-space:nowrap;color:#222">小和尚工艺品(带程序).prt</div>
<div class="abs" style="left:373px;top:4px;font-size:11px;line-height:15px;white-space:nowrap;color:#222">五轴程序测试件(带程序).prt</div>
<div class="abs" style="left:563px;top:4px;font-size:11px;line-height:15px;white-space:nowrap;color:#222">S件模型 (带程序) .prt</div>
<svg width="625" height="713" style="left:-1px;top:-1px" viewBox="595 148 625 713">
<g fill="none" stroke="#444" stroke-width="0.900"><path d="M603.5 153.500h-3v3.500h3v3.500h-3"/><path d="M605.0 161.500a3 3 0 0 1 5 -2.500M611.0 161a3 3 0 0 1 -5 2.500"/></g>
<path d="M742.0 156.500h-3.500v7h6v-4M742.5 154.500l2.500 2l-2.500 2" fill="none" stroke="#444" stroke-width="0.900"/>
<g fill="none" stroke="#444" stroke-width="0.900"><path d="M776.5 153.500h-3v3.500h3v3.500h-3"/><path d="M778.0 161.500a3 3 0 0 1 5 -2.500M784.0 161a3 3 0 0 1 -5 2.500"/></g>
<path d="M922.0 156.500h-3.500v7h6v-4M922.5 154.500l2.500 2l-2.500 2" fill="none" stroke="#444" stroke-width="0.900"/>
<g fill="none" stroke="#444" stroke-width="0.900"><path d="M954.5 153.500h-3v3.500h3v3.500h-3"/><path d="M956.0 161.500a3 3 0 0 1 5 -2.500M962.0 161a3 3 0 0 1 -5 2.500"/></g>
<path d="M1111.0 156.500h-3.500v7h6v-4M1111.5 154.500l2.500 2l-2.500 2" fill="none" stroke="#444" stroke-width="0.900"/>
<g fill="none" stroke="#444" stroke-width="0.900"><path d="M1144.5 153.500h-3v3.500h3v3.500h-3"/><path d="M1146.0 161.500a3 3 0 0 1 5 -2.500M1152.0 161a3 3 0 0 1 -5 2.500"/></g>
<defs>
<linearGradient id="mCyl" gradientUnits="userSpaceOnUse" x1="682.7" y1="277.4" x2="640.4" y2="322.7">
<stop offset="0" stop-color="#c8662c"/>
<stop offset="0.08" stop-color="#e0824a"/>
<stop offset="0.3" stop-color="#f0a070"/>
<stop offset="0.45" stop-color="#e88e5a"/>
<stop offset="0.75" stop-color="#d87840"/>
<stop offset="0.93" stop-color="#c06028"/>
<stop offset="1" stop-color="#a85020"/>
</linearGradient>
<linearGradient id="mGrn" gradientUnits="userSpaceOnUse" x1="757" y1="380.800" x2="749" y2="390"><stop offset="0" stop-color="#8fc488"/><stop offset="0.35" stop-color="#bfe6b4"/><stop offset="1" stop-color="#86b87e"/></linearGradient>
<radialGradient id="mBall" gradientUnits="userSpaceOnUse" cx="890" cy="540" r="150" fx="880" fy="515"><stop offset="0" stop-color="#d2bf73"/><stop offset="0.3" stop-color="#c4b064"/><stop offset="0.58" stop-color="#b19d52"/><stop offset="0.8" stop-color="#9a8640"/><stop offset="1" stop-color="#7f6c2e"/></radialGradient>
<linearGradient id="mBase" gradientUnits="userSpaceOnUse" x1="1000" y1="820" x2="1170" y2="640"><stop offset="0" stop-color="#8f7f3c"/><stop offset="0.2" stop-color="#b3a254"/><stop offset="0.5" stop-color="#cdbb68"/><stop offset="0.68" stop-color="#f4e493"/><stop offset="0.8" stop-color="#e6d583"/><stop offset="0.93" stop-color="#bfae5e"/><stop offset="1" stop-color="#a3934a"/></linearGradient>
<linearGradient id="mFace" gradientUnits="userSpaceOnUse" x1="1190" y1="700" x2="1060" y2="850"><stop offset="0" stop-color="#857638"/><stop offset="0.5" stop-color="#6d5f2c"/><stop offset="1" stop-color="#5e5226"/></linearGradient>
<linearGradient id="mStem" gradientUnits="userSpaceOnUse" x1="985" y1="690" x2="1060" y2="640"><stop offset="0" stop-color="#eddd8e"/><stop offset="0.35" stop-color="#d9c879"/><stop offset="1" stop-color="#b5a556"/></linearGradient>
<linearGradient id="mStemL" gradientUnits="userSpaceOnUse" x1="950" y1="680" x2="1010" y2="650"><stop offset="0" stop-color="#b7a658"/><stop offset="1" stop-color="#978740"/></linearGradient>
<clipPath id="cBall"><circle cx="894.500" cy="567" r="104.500"/></clipPath>
<clipPath id="cView"><rect x="596" y="173" width="624" height="688"/></clipPath>
</defs>
<g clip-path="url(#cView)">
<path d="M1137.9 641.6 L1136.6 640.9 L1134.9 640.6 L1132.7 640.9 L1130 641.7 L1127 643 L1123.5 644.8 L1119.7 647.1 L1115.5 649.9 L1111 653.1 L1106.2 656.7 L1101.1 660.8 L1095.7 665.2 L1090.2 670 L1084.5 675.1 L1078.7 680.6 L1072.7 686.3 L1066.7 692.2 L1060.7 698.3 L1054.6 704.6 L1048.7 711 L1042.8 717.4 L1037 723.9 L1031.4 730.4 L1026 736.9 L1020.7 743.3 L1015.8 749.5 L1011.1 755.6 L1006.8 761.5 L1002.8 767.2 L999.1 772.6 L995.9 777.6 L993.1 782.4 L990.6 786.8 L988.7 790.8 L987.1 794.4 L986.1 797.5 L985.5 800.2 L985.4 802.4 L985.8 804.2 L986.6 805.4 L1043.1 854.4 L1043.1 854.4 L1044.2 855 L1045.8 855 L1047.8 854.6 L1050.3 853.7 L1053.2 852.2 L1056.5 850.3 L1060.2 847.8 L1064.2 844.9 L1068.6 841.6 L1073.3 837.9 L1078.3 833.7 L1083.5 829.2 L1088.9 824.3 L1094.5 819.1 L1100.3 813.6 L1106.2 807.8 L1112.1 801.8 L1118.2 795.7 L1124.2 789.4 L1130.1 783 L1136 776.5 L1141.8 770.1 L1147.5 763.6 L1153 757.2 L1158.2 750.9 L1163.2 744.7 L1168 738.7 L1172.4 732.9 L1176.5 727.3 L1180.3 722 L1183.7 717 L1186.7 712.4 L1189.2 708.1 L1191.3 704.3 L1193 700.8 L1194.2 697.8 L1195 695.3 L1195.3 693.2 L1195.1 691.7 L1194.4 690.6Z" fill="url(#mBase)"/>
<path d="M1194.4 690.6 L1195.2 692.1 L1195.1 694.6 L1194.2 697.8 L1192.5 701.9 L1190 706.8 L1186.7 712.4 L1182.6 718.7 L1177.8 725.5 L1172.4 732.9 L1166.4 740.6 L1159.9 748.8 L1153 757.2 L1145.6 765.7 L1138 774.4 L1130.1 783 L1122.2 791.5 L1114.1 799.8 L1106.2 807.8 L1098.4 815.4 L1090.8 822.6 L1083.5 829.2 L1076.6 835.1 L1070.1 840.4 L1064.2 844.9 L1058.9 848.7 L1054.3 851.6 L1050.3 853.7 L1047.1 854.8 L1044.7 855.1 L1043.1 854.4 L1042.3 852.9 L1042.4 850.4 L1043.3 847.2 L1045 843.1 L1047.5 838.2 L1050.8 832.6 L1054.9 826.3 L1059.7 819.5 L1065.1 812.1 L1071.1 804.4 L1077.6 796.2 L1084.5 787.8 L1091.9 779.3 L1099.5 770.6 L1107.4 762 L1115.3 753.5 L1123.4 745.2 L1131.3 737.2 L1139.1 729.6 L1146.7 722.4 L1154 715.8 L1160.9 709.9 L1167.4 704.6 L1173.3 700.1 L1178.6 696.3 L1183.2 693.4 L1187.2 691.3 L1190.4 690.2 L1192.8 689.9 L1194.4 690.6Z" fill="url(#mFace)"/>
<path d="M1141.1 645.7 L1139.3 646 L1137 646.6 L1134.4 647.7 L1131.5 649.2 L1128.2 651.1 L1124.7 653.3 L1120.9 656 L1116.8 659 L1112.4 662.4 L1107.9 666.1 L1103.1 670.1 L1098.1 674.4 L1093.1 679 L1087.8 683.8 L1082.5 688.9 L1077.1 694.1 L1071.7 699.6 L1066.2 705.2 L1060.8 710.9 L1055.4 716.6 L1050.1 722.5 L1044.8 728.4 L1039.7 734.2 L1034.7 740.1 L1029.9 745.9 L1025.3 751.6 L1020.9 757.1 L1016.7 762.6 L1012.8 767.9 L1009.2 772.9 L1005.8 777.8 L1002.8 782.4 L1000.1 786.7 L997.8 790.7 L995.8 794.4 L994.2 797.8 L993 800.9 L992.1 803.5 L991.6 805.8 L991.5 807.7" fill="none" stroke="#8a7a3a" stroke-width="0.600" opacity="0.700"/>
<path d="M973.7 625.8 L995 605 L1020 627 L1040 644 L1060 661 L1078 674 L1090 680 L1098 688 L1068 712 L1043 732 L1035 723.6 L996 668Z" fill="url(#mStem)"/>
<path d="M973.7 625.8 L996 668 L1035 723.6 L1043 732 L1021 757 L1012.8 748.7 L979 709.6 L945.8 659 L930 640 L950 600Z" fill="url(#mStemL)"/>
<path d="M973.700 625.800L996 668L1035 723.600" fill="none" stroke="#efe09a" stroke-width="1.400" opacity="0.850"/>
<path d="M1012.800 748.700L1035 723.600L1085.500 681.700" fill="none" stroke="#8a7a3a" stroke-width="0.700" opacity="0.600"/>
<path d="M988.9 615.1 L987.5 617.8 L986 620.5 L984.4 623.1 L982.8 625.7 L981.1 628.2 L979.3 630.6 L977.4 633.1 L975.5 635.4 L973.5 637.7 L971.4 640 L969.3 642.1 L967.1 644.3 L964.8 646.3 L962.5 648.3 L960.1 650.2 L957.7 652.1 L955.2 653.9 L952.7 655.6 L950.1 657.2 L947.5 658.8" fill="none" stroke="#ab9a50" stroke-width="8"/>
<path d="M991.1 620.6 L989.8 623 L988.3 625.4 L986.8 627.7 L985.2 630.1 L983.6 632.3 L981.9 634.6 L980.2 636.8 L978.4 638.9 L976.6 641 L974.7 643.1 L972.7 645.1 L970.7 647 L968.7 648.9 L966.6 650.8 L964.4 652.6 L962.2 654.3 L960 656 L957.7 657.6 L955.4 659.2 L953.1 660.7" fill="none" stroke="#c9b869" stroke-width="1.200" opacity="0.800"/>
<circle cx="894.500" cy="567" r="104.500" fill="url(#mBall)"/>
<g clip-path="url(#cBall)" fill="none">
<path d="M873.5 495.4 L914.9 504.8 L926.9 543.5 L901.6 572.9 L860.1 564.9 L846.8 526.1 L873.5 495.4" stroke="#6f5f2a" stroke-width="1.800" opacity="0.600"/>
<path d="M873.5 495.4 L914.9 504.8 L926.9 543.5 L901.6 572.9 L860.1 564.9 L846.8 526.1 L873.5 495.4" stroke="#d8c67a" stroke-width="0.700" opacity="0.600" transform="translate(0.800 0.900)"/>
<path d="M873.5 495.4 L872.2 478.1 L910.9 470 L930.9 487.4 L914.9 504.8" stroke="#6f5f2a" stroke-width="1.800" opacity="0.600"/>
<path d="M873.5 495.4 L872.2 478.1 L910.9 470 L930.9 487.4 L914.9 504.8" stroke="#d8c67a" stroke-width="0.700" opacity="0.600" transform="translate(0.800 0.900)"/>
<path d="M928.3 544.8 L959 562.2 L953.7 598.3 L918.9 607.1 L901.6 572.9" stroke="#6f5f2a" stroke-width="1.800" opacity="0.600"/>
<path d="M928.3 544.8 L959 562.2 L953.7 598.3 L918.9 607.1 L901.6 572.9" stroke="#d8c67a" stroke-width="0.700" opacity="0.600" transform="translate(0.800 0.900)"/>
<path d="M846.8 526.1 L814.7 536 L809.4 570.2 L834.8 590.3 L860.1 564.9" stroke="#6f5f2a" stroke-width="1.800" opacity="0.600"/>
<path d="M846.8 526.1 L814.7 536 L809.4 570.2 L834.8 590.3 L860.1 564.9" stroke="#d8c67a" stroke-width="0.700" opacity="0.600" transform="translate(0.800 0.900)"/>
<path d="M930.9 487.4 L967 495.4 L991.1 527.5 L961.7 562.2" stroke="#6f5f2a" stroke-width="1.800" opacity="0.600"/>
<path d="M930.9 487.4 L967 495.4 L991.1 527.5 L961.7 562.2" stroke="#d8c67a" stroke-width="0.700" opacity="0.600" transform="translate(0.800 0.900)"/>
<path d="M872.2 478.1 L828.1 484.7 L808.1 511.4 L813.4 535" stroke="#6f5f2a" stroke-width="1.800" opacity="0.600"/>
<path d="M872.2 478.1 L828.1 484.7 L808.1 511.4 L813.4 535" stroke="#d8c67a" stroke-width="0.700" opacity="0.600" transform="translate(0.800 0.900)"/>
<path d="M834.8 590.3 L850.8 632.5 L889.5 637.8 L918.9 607.1" stroke="#6f5f2a" stroke-width="1.800" opacity="0.600"/>
<path d="M834.8 590.3 L850.8 632.5 L889.5 637.8 L918.9 607.1" stroke="#d8c67a" stroke-width="0.700" opacity="0.600" transform="translate(0.800 0.900)"/>
<path d="M850.8 632.5 L840.9 649 L868.2 663.7 L901.6 661.1 L889.5 637.8" stroke="#6f5f2a" stroke-width="1.800" opacity="0.600"/>
<path d="M850.8 632.5 L840.9 649 L868.2 663.7 L901.6 661.1 L889.5 637.8" stroke="#d8c67a" stroke-width="0.700" opacity="0.600" transform="translate(0.800 0.900)"/>
<path d="M961.7 562.2 L988.4 542.2 L1001.7 575.6" stroke="#6f5f2a" stroke-width="1.800" opacity="0.600"/>
<path d="M961.7 562.2 L988.4 542.2 L1001.7 575.6" stroke="#d8c67a" stroke-width="0.700" opacity="0.600" transform="translate(0.800 0.900)"/>
<path d="M953.7 598.3 L967 623.1 L945.6 655.7 L901.6 661.1" stroke="#6f5f2a" stroke-width="1.800" opacity="0.600"/>
<path d="M953.7 598.3 L967 623.1 L945.6 655.7 L901.6 661.1" stroke="#d8c67a" stroke-width="0.700" opacity="0.600" transform="translate(0.800 0.900)"/>
<path d="M809.4 570.2 L797.4 595.6 L814.7 634.3 L840.9 649" stroke="#6f5f2a" stroke-width="1.800" opacity="0.600"/>
<path d="M809.4 570.2 L797.4 595.6 L814.7 634.3 L840.9 649" stroke="#d8c67a" stroke-width="0.700" opacity="0.600" transform="translate(0.800 0.900)"/>
<path d="M967 623.1 L991.1 607.6" stroke="#6f5f2a" stroke-width="1.800" opacity="0.600"/>
<path d="M967 623.1 L991.1 607.6" stroke="#d8c67a" stroke-width="0.700" opacity="0.600" transform="translate(0.800 0.900)"/>
<path d="M910.9 470 L905.6 462" stroke="#6f5f2a" stroke-width="1.800" opacity="0.600"/>
<path d="M910.9 470 L905.6 462" stroke="#d8c67a" stroke-width="0.700" opacity="0.600" transform="translate(0.800 0.900)"/>
<path d="M967 495.4 L972.4 484.7" stroke="#6f5f2a" stroke-width="1.800" opacity="0.600"/>
<path d="M967 495.4 L972.4 484.7" stroke="#d8c67a" stroke-width="0.700" opacity="0.600" transform="translate(0.800 0.900)"/>
<path d="M828.1 484.7 L822.7 474" stroke="#6f5f2a" stroke-width="1.800" opacity="0.600"/>
<path d="M828.1 484.7 L822.7 474" stroke="#d8c67a" stroke-width="0.700" opacity="0.600" transform="translate(0.800 0.900)"/>
<path d="M808.1 511.4 L793.4 519.5" stroke="#6f5f2a" stroke-width="1.800" opacity="0.600"/>
<path d="M808.1 511.4 L793.4 519.5" stroke="#d8c67a" stroke-width="0.700" opacity="0.600" transform="translate(0.800 0.900)"/>
<path d="M797.4 595.6 L788 599.6" stroke="#6f5f2a" stroke-width="1.800" opacity="0.600"/>
<path d="M797.4 595.6 L788 599.6" stroke="#d8c67a" stroke-width="0.700" opacity="0.600" transform="translate(0.800 0.900)"/>
</g>
<g fill="none" stroke="#14eef0" stroke-linejoin="round">
<path d="M872.2 478.9 L877.5 496 L914.9 505.3 L930.9 487.9" stroke-width="3"/>
<path d="M830.8 478.9 L872.2 475.4" stroke-width="3"/>
<path d="M928.3 546.2 L959 562.7 L953.7 598.3 L918.9 606.3 L904.2 574.2 L928.3 546.2" stroke-width="3"/>
<path d="M814.7 536.8 L845.5 529.3 L860.1 564.9 L834.8 588.9 L809.9 570.2 L814.7 536.8" stroke-width="3"/>
<path d="M850.8 633 L889.5 638.4 L901.6 661.1 L868.2 663.7 L841.4 649 L850.8 633" stroke-width="3"/>
<path d="M930.9 487.9 L967 496 L977.2 508.2" stroke-width="3"/>
<path d="M908.2 663.7 L940.3 659.7" stroke-width="3"/>
<path d="M791.2 556.9 L794.7 575.6" stroke-width="3"/>
<path d="M998.5 570.2 L995.1 598.3" stroke-width="3"/>
<path d="M812.1 634.3 L841.4 650.4" stroke-width="3"/>
<path d="M872.2 478.9 L910.9 470.8 L930.9 487.9" stroke-width="3"/>
<path d="M846.8 526.1 L873.5 496" stroke-width="3"/>
<path d="M901.6 573.4 L918.9 607.1" stroke-width="3"/>
<path d="M918.9 607.1 L889.5 637.8" stroke-width="3"/>
<path d="M961.7 562.2 L988.4 542.2" stroke-width="3"/>
<path d="M967 496 L991.1 527.5" stroke-width="3"/>
<path d="M846.8 522.7 L873.5 497.6" stroke-width="6.500"/>
<path d="M860.1 565.4 L901.6 573.4" stroke-width="6.500"/>
<path d="M915.5 506.6 L928.8 543.5" stroke-width="6.500"/>
<path d="M964.3 560.9 L987.1 543.5" stroke-width="6.500"/>
<path d="M834 596.4 L850.8 631.7" stroke-width="6.500"/>
<path d="M901.6 626.3 L918.9 610.3" stroke-width="6.500"/>
<path d="M808.6 513.6 L813.4 534.2" stroke-width="6.500"/>
<path d="M798.7 584.9 L806.7 573.4" stroke-width="6.500"/>
<path d="M955.5 606.3 L967 623.7" stroke-width="6.500"/>
<path d="M910.9 464.7 L905.6 462.8" stroke-width="6.500"/>
<path d="M976.4 507.4 L980.4 503.4" stroke-width="6.500"/>
<path d="M832.1 478.1 L870.8 474" stroke-width="6.500"/>
<path d="M937.6 488.7 L953.7 492.7" stroke-width="6.500"/>
<path d="M877.5 496.8 L892.2 500.2" stroke-width="6.500"/>
</g>
<g fill="none" stroke="#e01818" stroke-width="2.100" stroke-dasharray="8 6">
<path d="M823.3 442.7 L750.2 517.9"/>
<path d="M750.2 517.9 L769 528.4"/>
<path d="M925.7 547.2 L988.4 526.3"/>
<path d="M925.7 547.2 L971.7 597.3"/>
<path d="M821.2 505.4 L819.1 538.8 L848.4 568.1"/>
<path d="M848.4 568.1 L810.8 614.1"/>
<path d="M769 488.7 L789.9 482.4"/>
<path d="M754.3 505.4 L762.7 501.2"/>
<path d="M950.8 576.4 L992.6 601.5"/>
</g>
<g fill="none" stroke="#1010d8" stroke-width="2.200" stroke-dasharray="7 4">
<path d="M771.1 488.7 L808.7 505.4"/>
<path d="M777.3 484.5 L814.9 501.2"/>
<path d="M783.6 501.2 L812.9 517.9"/>
<path d="M750.2 517.9 L783.6 547.2"/>
<path d="M821.2 438.5 L858.8 463.6"/>
<path d="M825.4 444.8 L854.6 469.9"/>
<path d="M825.4 501.2 L858.8 505.4"/>
<path d="M819.1 534.6 L850.5 540.9"/>
<path d="M848.4 568.1 L871.4 570.2"/>
<path d="M804.5 612 L833.8 614.1"/>
<path d="M806.6 618.2 L833.8 619.1"/>
<path d="M967.5 597.3 L975.9 614.1"/>
<path d="M992.6 605.7 L1000.9 601.5"/>
</g>
<g fill="none" stroke="#f2c21a" stroke-width="2">
<path d="M848.4 467.8 L858.8 472"/>
<path d="M846.3 513.8 L856.7 509.6"/>
<path d="M837.9 570.2 L850.5 571.4"/>
<path d="M789.9 593.2 L800.3 589"/>
<path d="M796.1 618.2 L806.6 614.9"/>
<path d="M867.2 672.6 L873.5 680.9"/>
<path d="M1007.2 584.8 L1013.5 591.1"/>
<path d="M967.5 478.2 L969.6 486.6"/>
<path d="M921.5 469.9 L923.6 480.3"/>
<path d="M804.5 647.5 L814.9 644.2"/>
</g><g fill="none" stroke="#f6c8dc" stroke-width="2">
<path d="M850.5 463.6 L860.9 469.9"/>
<path d="M854.6 503.3 L860.9 505.4"/>
<path d="M833.8 618.2 L842.1 621.6"/>
<path d="M1000.9 576.4 L1011.4 570.2"/>
<path d="M975.9 505.4 L988.4 499.1"/>
<path d="M959.1 484.5 L963.3 492.9"/>
<path d="M800.3 505.4 L810.8 520"/>
<path d="M789.9 545.1 L796.1 551.4"/>
<path d="M837.9 647.5 L846.3 653.8"/>
<path d="M925.7 668.4 L917.3 680.9"/>
</g>
<g fill="none" stroke="#e01818" stroke-width="2.100" stroke-dasharray="8 6">
<path d="M920.2 420.9 L920.2 446.5"/>
<path d="M927.2 443 L962 449.9 L938.8 472"/>
<path d="M938.8 460.4 L966.7 474.3"/>
<path d="M959.7 449.9 L982.9 455.7"/>
<path d="M1014.3 468.5 L1050.3 502.2 L1064.2 513.8"/>
<path d="M1003.8 581.2 L1013.1 590.5"/>
<path d="M752.1 606.2 L777.6 662"/>
<path d="M815.9 674.7 L822.9 679.4"/>
<path d="M832.2 673.6 L850.8 672.4"/>
<path d="M843.8 668.9 L846.1 679.4"/>
<path d="M829.9 686.3 L836.9 695.6"/>
<path d="M839.2 686.3 L841.5 693.3"/>
<path d="M836.9 700.3 L839.2 707.2"/>
<path d="M835.7 718.9 L838 714.2"/>
<path d="M843.8 700.3 L850.8 707.2"/>
<path d="M855.4 686.3 L862.4 693.3"/>
<path d="M869.4 698 L876.3 704.9"/>
<path d="M857.8 714.2 L864.7 721.2"/>
<path d="M883.3 711.9 L892.6 718.9"/>
<path d="M822.9 547 L843.8 563.2 L818.3 605"/>
</g>
<g fill="none" stroke="#1010d8" stroke-width="2.300" stroke-dasharray="7 4">
<path d="M917.9 417.4 L919 460.4"/>
<path d="M926 448.8 L924.8 467.4"/>
<path d="M966.7 451.1 L964.3 483.6"/>
<path d="M958.5 462.7 L957.4 490.6"/>
<path d="M978.3 448.8 L971.3 476.7"/>
<path d="M984.1 449.9 L975.9 483.6"/>
<path d="M1061.9 515 L1006.1 576.5"/>
<path d="M1067.7 518.5 L1013.1 578.9"/>
<path d="M927.2 488.3 L920.2 509.2"/>
<path d="M924.8 511.5 L926 520.8"/>
<path d="M980.6 534.7 L979.4 541.7"/>
<path d="M917.9 553.3 L915.6 560.3"/>
<path d="M748.6 601.6 L783.4 588.8"/>
<path d="M749.7 604.6 L784.6 592.3"/>
<path d="M762.5 621.3 L792.7 614.3"/>
<path d="M771.8 625.9 L799.7 617.8"/>
<path d="M777.6 660.8 L822.9 649.2"/>
<path d="M777.6 664.3 L822.9 652.7"/>
<path d="M813.6 677 L850.8 639.9"/>
<path d="M862.4 663.1 L897.2 630.6"/>
<path d="M865.9 665.4 L900.7 632.9"/>
<path d="M846.1 666.6 L850.8 670.1"/>
<path d="M849.6 700.3 L856.6 695.6"/>
<path d="M850.8 703.8 L857.8 699.1"/>
<path d="M839.2 716.5 L845 710.7"/>
<path d="M841.5 719.3 L847.3 713.5"/>
<path d="M863.6 685.2 L867 688.7"/>
<path d="M869.4 720 L876.3 713.1"/>
<path d="M878.7 706.1 L885.6 700.3"/>
<path d="M892.6 691 L906.5 681.7"/>
<path d="M908.9 679.4 L922.8 667.8"/>
<path d="M912.3 682.2 L926.3 670.5"/>
<path d="M892.6 716.5 L897.2 721.2"/>
<path d="M846.1 566.7 L855.4 567.9"/>
<path d="M861.2 567.9 L869.4 569"/>
<path d="M806.7 610.8 L813.6 610.8"/>
<path d="M821.8 612 L828.7 612.5"/>
<path d="M807.8 615.5 L813.6 616"/>
<path d="M821.8 616.7 L828.7 617.4"/>
<path d="M819.4 541.2 L825.2 541.9"/>
<path d="M833.4 542.8 L839.2 543.5"/>
</g>
<path d="M1048 491.8 L1001.5 539.4" fill="none" stroke="#1010d8" stroke-width="3.600" stroke-dasharray="9 6"/>
<path d="M1014.3 468.5 L985.2 499.9" fill="none" stroke="#1010d8" stroke-width="1.400"/>
<g fill="none" stroke="#f2c21a" stroke-width="2">
<path d="M923.7 469.7 L923.7 479"/>
<path d="M957.4 485.9 L956.2 492.9"/>
<path d="M967.8 480.1 L965.5 490.6"/>
<path d="M1000.3 541.7 L998 545.2"/>
<path d="M1001.5 588.2 L1010.8 580"/>
<path d="M784.6 592.3 L797.4 586.5"/>
<path d="M795 616.7 L804.3 613.2"/>
<path d="M809 648 L822.9 644.5"/>
<path d="M867 679.4 L871.7 672.4"/>
<path d="M839.2 648 L850.8 639.9"/>
<path d="M869.4 569.7 L878.7 570.2"/>
<path d="M829.9 613.2 L836.9 613.9"/>
</g><g fill="none" stroke="#f6c8dc" stroke-width="2">
<path d="M917.9 465 L919 476.7"/>
<path d="M963.2 485.9 L962 492.9"/>
<path d="M973.6 485.9 L971.3 491.8"/>
<path d="M982.9 501 L975.9 509.2"/>
<path d="M786.9 584.1 L797.4 581.8"/>
<path d="M790.4 609.7 L798.5 607.4"/>
<path d="M871.7 681.7 L876.3 674.7"/>
<path d="M878.7 569.7 L883.3 569.3"/>
<path d="M833.4 619 L841.5 620.1"/>
</g>
<g fill="none" stroke="#14eef0" stroke-width="2.400">
<path d="M975.9 499.9 L989.9 520.8 L996.9 541.7 L999.6 562.6 L998 599.8"/>
<path d="M791.6 567.9 L797.4 593.4 L809 623.6 L827.6 646.9 L850.8 663.1 L874 671.2"/>
</g>
<circle cx="907" cy="706.800" r="3.600" fill="#f0a060"/>
<g fill="none" stroke-width="1.100">
<path d="M813 491L745 429" stroke="#2050c8"/><path d="M745 429l11 5l-5 5z" fill="#2050c8" stroke="none"/>
<path d="M813 491L854.500 437.500" stroke="#20702e" stroke-width="1.300"/><path d="M854.500 437.500l-3.500 13l-7 -5.500z" fill="#20702e" stroke="none"/>
<path d="M813 491L765.600 530" stroke="#b84848" stroke-width="1.300"/><path d="M765.600 530l8.500 -11.500l5 6.500z" fill="#d04848" stroke="none"/>
</g>
<text x="748" y="425" font-size="11" fill="#2050c8" font-family="Liberation Sans,sans-serif">ZM</text>
<text x="836" y="434" font-size="11" fill="#3a9a4a" font-family="Liberation Sans,sans-serif">YM</text>
<text x="765" y="545" font-size="11" fill="#c05050" font-family="Liberation Sans,sans-serif">XM</text>
<path d="M757 380.8 L788.4 407.5 L802.4 425 L796.6 430.8 L779 419 L749 390Z" fill="url(#mGrn)" stroke="#5f8a5a" stroke-width="0.500"/>
<path d="M788.400 407.500L779 419" stroke="#3d5a3a" stroke-width="0.800"/>
<path d="M802.4 425 L812.8 436.5 L807.5 442 L796.6 430.8Z" fill="#f5d400"/>
<circle cx="814" cy="440.800" r="4" fill="#f2a868"/><circle cx="812.500" cy="440" r="1.300" fill="#fbe3cf"/>
<path d="M682.7 277.4 L774.5 363.4 L733.1 407.5 L640.4 322.7Z" fill="url(#mCyl)"/>
<path d="M682.7 277.4Q656.5 295 640.4 322.7Z" fill="url(#mCyl)"/>
<ellipse cx="753.8" cy="385.4" rx="30.200" ry="3.600" transform="rotate(133.2 753.8 385.4)" fill="#c4764a"/>
<path d="M640.4 322.7 L682.7 277.4 L774.5 363.4" fill="none" stroke="#8a4a20" stroke-width="0.600" opacity="0.800"/>
<path d="M640.4 322.7 L733.1 407.5" fill="none" stroke="#8a4a20" stroke-width="0.600" opacity="0.800"/>
<g fill="none" stroke="#c4c4c4" stroke-width="0.900">
<path d="M696 762.700L659 801L687 826.600L723 787ZM675 780L703 804.500L723 787M703 804.500L687 826.600"/>
</g>
<path d="M675 780L652 758.500" stroke="#1f5fe0" stroke-width="4.500"/><path d="M644 751.600l15 3.500l-8.500 9z" fill="#1f5fe0"/>
<path d="M698.500 785L713 766" stroke="#1e6a28" stroke-width="4.500"/><path d="M720.500 756.500l-2.500 15l-10 -7.500z" fill="#1e6a28"/>
<path d="M682 803L667 815.500" stroke="#e03848" stroke-width="4.500"/><path d="M658 823l6 -13.500l7.500 9z" fill="#e03848"/>
<text x="634" y="750" font-size="10" fill="#3a6ae0" font-family="Liberation Sans,sans-serif">Z</text>
<text x="721" y="756" font-size="10" fill="#4a9a50" font-family="Liberation Sans,sans-serif">Y</text>
<text x="649" y="832" font-size="10" fill="#d84a5a" font-family="Liberation Sans,sans-serif">X</text>
</g>
</svg>
<div class="abs" style="left:411px;top:689px;color:#5e5e5e;white-space:nowrap;line-height:18px;height:18px"><span class="wm">UG</span><span class="wc">爱好者论坛</span><span class="wm" style="margin-left:10px">WWW.UGSNX.COM</span></div>
</div>
</body></html>
